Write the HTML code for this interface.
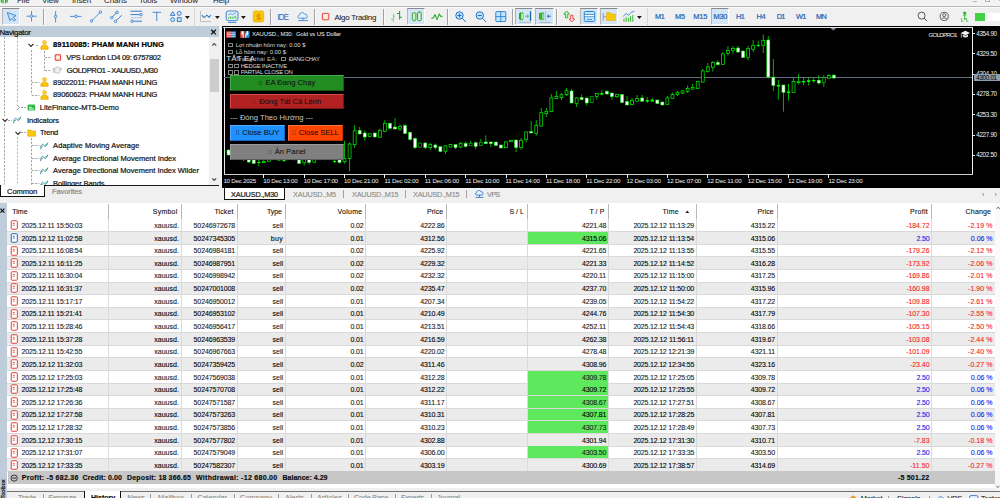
<!DOCTYPE html>
<html><head><meta charset="utf-8"><title>MT5</title>
<style>
html,body{margin:0;padding:0;}
body{width:1000px;height:498px;overflow:hidden;background:#f0f0f0;position:relative;font-family:"Liberation Sans",sans-serif;}
div{position:absolute;box-sizing:border-box;}
svg{position:absolute;overflow:visible;}
.t{font-size:7px;line-height:9px;color:#1c1c1c;white-space:nowrap;letter-spacing:-0.18px;-webkit-text-stroke:0.22px;}
.n{font-size:7px;line-height:9px;color:#111;white-space:nowrap;letter-spacing:-0.1px;-webkit-text-stroke:0.1px;}
.c{font-size:6.4px;line-height:8px;color:#fff;white-space:nowrap;letter-spacing:-0.15px;}
.m{font-size:8px;line-height:9px;color:#222;white-space:nowrap;letter-spacing:-0.1px;}
.tf{font-size:7.4px;line-height:9px;color:#2467b4;white-space:nowrap;letter-spacing:-0.1px;-webkit-text-stroke:0.22px;}
.btn{font-size:7.6px;line-height:10px;color:#0a0a0a;white-space:nowrap;text-align:center;}
.red{color:#f5222a;}
.blu{color:#1418f0;}
.g{color:#8a8a8a;}
</style></head><body>

<div style="left:0px;top:0px;width:1000px;height:6px;background:#f3f3f3;"></div>
<div class="m" style="left:17px;top:-4.2px;">File</div>
<div class="m" style="left:42px;top:-4.2px;">View</div>
<div class="m" style="left:72px;top:-4.2px;">Insert</div>
<div class="m" style="left:104px;top:-4.2px;">Charts</div>
<div class="m" style="left:139px;top:-4.2px;">Tools</div>
<div class="m" style="left:170px;top:-4.2px;">Window</div>
<div class="m" style="left:213px;top:-4.2px;">Help</div>
<svg style="left:0px;top:-3px" width="9" height="8"><path d="M1.4 0 V5.6 M3 0 V6.6 M5.6 0 V6.6 M7.2 0 V5.6" stroke="#2fb52f" stroke-width="1.3"/></svg>
<div style="left:973px;top:1.0px;width:4.4px;height:0.8px;background:#b4b4b4;"></div>
<div style="left:985.4px;top:-2px;width:4.6px;height:4px;border:0.7px solid #b4b4b4;"></div>
<svg style="left:996px;top:-2px" width="5" height="5"><path d="M1 0 L4.6 3.6" stroke="#b4b4b4" stroke-width="0.8"/></svg>
<div style="left:0px;top:5.6px;width:1000px;height:21px;background:#f0f0f0;"></div>
<div style="left:0px;top:6.1px;width:1000px;height:0.8px;background:#b8b8b8;"></div>
<div style="left:0px;top:6.9px;width:1000px;height:0.8px;background:#fcfcfc;"></div>
<div style="left:2.2px;top:8px;width:17.6px;height:17px;background:#d3e5f6;border-top:0.7px solid #8a8a8a;border-left:0.6px solid #b4b4b4;border-right:0.7px solid #fdfdfd;border-bottom:0.6px solid #fdfdfd;"></div>
<svg style="left:5px;top:9px" width="14" height="14" viewBox="0 0 14 14" ><path d="M2.3 3.5 L11 6.6 L8.3 8.3 L10.6 11 L9.2 12 L6.7 9.5 L5 11.7 Z" fill="#c4e2f8" stroke="#3a80c8" stroke-width="0.9" stroke-linejoin="round"/></svg>
<svg style="left:25px;top:9px" width="14" height="14" viewBox="0 0 14 14" ><path d="M1.5 7.2 H11.5 M6.5 2 V12.5" stroke="#2a78c8" stroke-width="0.8" fill="none"/><circle cx="6.5" cy="7.2" r="1.3" fill="#cfe6f8" stroke="#2a78c8" stroke-width="0.7"/></svg>
<div style="left:43.0px;top:9px;width:0.8px;height:15.6px;background:#a2a2a2;"></div>
<div style="left:43.8px;top:9px;width:0.7px;height:15.6px;background:#fafafa;"></div>
<svg style="left:50px;top:9px" width="12" height="15" viewBox="0 0 12 15" ><path d="M5.6 2 V13.5" stroke="#2a78c8" stroke-width="0.8"/><circle cx="5.6" cy="7.5" r="1.35" fill="#cfe6f8" stroke="#2a78c8" stroke-width="0.7"/></svg>
<svg style="left:69px;top:9px" width="14" height="14" viewBox="0 0 14 14" ><path d="M1 7.4 H12.5" stroke="#2a78c8" stroke-width="0.8"/><circle cx="7" cy="7.4" r="1.35" fill="#cfe6f8" stroke="#2a78c8" stroke-width="0.7"/></svg>
<svg style="left:89px;top:9px" width="14" height="14" viewBox="0 0 14 14" ><path d="M2.5 12 L11.5 3" stroke="#2a78c8" stroke-width="0.8"/><circle cx="2.6" cy="12" r="1.3" fill="#cfe6f8" stroke="#2a78c8" stroke-width="0.7"/><circle cx="11.4" cy="3.1" r="1.3" fill="#cfe6f8" stroke="#2a78c8" stroke-width="0.7"/></svg>
<svg style="left:109px;top:9px" width="14" height="14" viewBox="0 0 14 14" ><path d="M2.7 8.6 L8 3.3 M6.5 12.3 L12.8 6.2" stroke="#2a78c8" stroke-width="0.9"/><circle cx="8" cy="3.3" r="1.3" fill="#cfe6f8" stroke="#2a78c8" stroke-width="0.75"/><circle cx="2.7" cy="8.6" r="1.3" fill="#cfe6f8" stroke="#2a78c8" stroke-width="0.75"/><circle cx="6.5" cy="12.3" r="1.3" fill="#cfe6f8" stroke="#2a78c8" stroke-width="0.75"/></svg>
<svg style="left:129px;top:9px" width="14" height="14" viewBox="0 0 14 14" ><path d="M1.5 2.2 H13 M1.5 5.6 H11.5 M4.4 12.2 H13" stroke="#2a78c8" stroke-width="0.95"/><path d="M2 8.8 H13" stroke="#9cc6ea" stroke-width="0.9"/><circle cx="12" cy="5.6" r="1.3" fill="#cfe6f8" stroke="#2a78c8" stroke-width="0.75"/><circle cx="3.1" cy="12.2" r="1.3" fill="#cfe6f8" stroke="#2a78c8" stroke-width="0.75"/></svg>
<svg style="left:151px;top:10px" width="12" height="12" viewBox="0 0 12 12" ><path d="M1.5 2.3 H10 M5.75 2.3 V11" stroke="#2a78c8" stroke-width="0.85" fill="none"/></svg>
<svg style="left:169px;top:9px" width="14" height="14" viewBox="0 0 14 14" ><path d="M3.7 2.6 L6 6.4 H1.4 Z" fill="#cfe6f8" stroke="#2a78c8" stroke-width="0.9" stroke-linejoin="round"/><circle cx="10.2" cy="4.4" r="2" fill="#cfe6f8" stroke="#2a78c8" stroke-width="0.9"/><circle cx="3.7" cy="10.6" r="2" fill="#cfe6f8" stroke="#2a78c8" stroke-width="0.9"/><rect x="8.3" y="8.7" width="3.8" height="3.8" fill="#cfe6f8" stroke="#2a78c8" stroke-width="0.9"/></svg>
<svg style="left:184.9px;top:15.7px" width="5" height="4"><path d="M0 0 L4.8 0 L2.4 3 Z" fill="#1a1a1a"/></svg>
<svg style="left:194.0px;top:8.5px" width="1" height="16"><line x1="0.5" y1="0" x2="0.5" y2="16" stroke="#b2b2b2" stroke-width="0.9" stroke-dasharray="0.9,1"/></svg>
<svg style="left:199px;top:9px" width="14" height="14" viewBox="0 0 14 14" ><path d="M1.5 2 V12.5 H12" stroke="#a9a9a9" stroke-width="0.7" fill="none"/><path d="M2.8 6.2 L5 8.6 L8 6.2 L10 8.3 L12 6" stroke="#2a78c8" stroke-width="1.05" fill="none"/></svg>
<svg style="left:214.79999999999998px;top:15.7px" width="5" height="4"><path d="M0 0 L4.8 0 L2.4 3 Z" fill="#1a1a1a"/></svg>
<svg style="left:225px;top:9px" width="15" height="15" viewBox="0 0 15 15" ><rect x="1.2" y="2" width="11.8" height="9.6" rx="2" fill="#e6f1fb" stroke="#2a78c8" stroke-width="0.9"/><path d="M3 6 L5.5 4.6 L7.5 5.6 L11 3.6" stroke="#2a78c8" stroke-width="0.7" fill="none"/><path d="M3.6 9.8 V8 M5.4 9.8 V7.4 M7.2 9.8 V7.8 M9 9.8 V7 M10.8 9.8 V6.6" stroke="#2db52d" stroke-width="0.8"/><path d="M3 13.4 H11.4" stroke="#2a78c8" stroke-width="0.9"/></svg>
<svg style="left:240.79999999999998px;top:15.7px" width="5" height="4"><path d="M0 0 L4.8 0 L2.4 3 Z" fill="#1a1a1a"/></svg>
<svg style="left:252px;top:10px" width="13" height="13" viewBox="0 0 13 13" ><rect x="1.3" y="1" width="10.4" height="11" rx="1.6" fill="#f7c80a" stroke="#e9a90c" stroke-width="0.7"/><text x="6.5" y="9.6" font-family='"Liberation Sans",sans-serif' font-size="8.4" font-weight="bold" text-anchor="middle" fill="#e08a00">$</text></svg>
<div style="left:270.1px;top:9px;width:0.8px;height:15.6px;background:#a2a2a2;"></div>
<div style="left:270.9px;top:9px;width:0.7px;height:15.6px;background:#fafafa;"></div>
<div class="t" style="left:277.2px;top:13.0px;font-size:8.2px;letter-spacing:-0.923px;color:#2a6fc0;-webkit-text-stroke:0;">IDE</div>
<svg style="left:296px;top:10px" width="14" height="13" viewBox="0 0 14 13" ><path d="M3.6 8.2 C1.4 8.2 1.2 5.4 3.4 5.1 C3.6 2.4 7.6 1.6 8.6 4.2 C11.6 3.6 12.4 8.2 9.8 8.2 Z" fill="#e6f1fb" stroke="#2a78c8" stroke-width="0.8"/><path d="M2 10.6 H12 M7 8.4 V10.6" stroke="#2a78c8" stroke-width="0.8"/></svg>
<div style="left:314.0px;top:9px;width:0.8px;height:15.6px;background:#a2a2a2;"></div>
<div style="left:314.79999999999995px;top:9px;width:0.7px;height:15.6px;background:#fafafa;"></div>
<svg style="left:321px;top:12px" width="9" height="9" viewBox="0 0 9 9" ><rect x="1.4" y="1.4" width="6.4" height="6.4" rx="0.5" fill="#fdeadb" stroke="#dc3232" stroke-width="0.9"/></svg>
<div class="t" style="left:334.5px;top:12.7px;font-size:7.9px;letter-spacing:-0.222px;color:#1e1e1e;line-height:10px;-webkit-text-stroke:0.08px;">Algo Trading</div>
<div style="left:382.90000000000003px;top:9px;width:0.8px;height:15.6px;background:#a2a2a2;"></div>
<div style="left:383.7px;top:9px;width:0.7px;height:15.6px;background:#fafafa;"></div>
<svg style="left:390px;top:9px" width="14" height="14" viewBox="0 0 14 14" ><path d="M3.4 5 V13.1 M1 10.3 H3.4 M3.4 7.2 H5" stroke="#5fcf5f" stroke-width="0.8" fill="none"/><path d="M9.6 1.9 V10.6 M7 4.4 H9.6 M9.6 8.25 H12" stroke="#22a822" stroke-width="1.05" fill="none"/></svg>
<div style="left:406.8px;top:8px;width:18.3px;height:17px;background:#d3e5f6;border-top:0.7px solid #8a8a8a;border-left:0.6px solid #b4b4b4;border-right:0.7px solid #fdfdfd;border-bottom:0.6px solid #fdfdfd;"></div>
<svg style="left:410px;top:9px" width="13" height="14" viewBox="0 0 13 14" ><rect x="2.3" y="3.9" width="3.6" height="7.4" rx="0.9" fill="#dcebdc" stroke="#22a822" stroke-width="0.95"/><rect x="7.6" y="3.2" width="3.6" height="8.4" rx="0.9" fill="#dcebdc" stroke="#22a822" stroke-width="0.95"/><path d="M4.1 11.3 V12.6 M9.4 2 V3.2" stroke="#22a822" stroke-width="0.7"/></svg>
<svg style="left:430px;top:10px" width="14" height="13" viewBox="0 0 14 13" ><path d="M1.4 8.6 L3.5 7.7 L5 4.6 L7 9.6 L9.3 3.9 L10.8 6.5 L12.6 6.3" stroke="#22a822" stroke-width="1.05" fill="none" stroke-linejoin="round"/></svg>
<div style="left:447.40000000000003px;top:9px;width:0.8px;height:15.6px;background:#a2a2a2;"></div>
<div style="left:448.2px;top:9px;width:0.7px;height:15.6px;background:#fafafa;"></div>
<svg style="left:454px;top:10px" width="14" height="14" viewBox="0 0 14 14" ><circle cx="5.5" cy="5.5" r="3.7" fill="#c6e6fb" stroke="#1f72c4" stroke-width="1"/><path d="M8.3 8.3 L11.8 12" stroke="#1f72c4" stroke-width="1"/><path d="M3.4 5.5 H7.6 M5.5 3.4 V7.6" stroke="#1f72c4" stroke-width="1.1"/></svg>
<svg style="left:474px;top:10px" width="14" height="14" viewBox="0 0 14 14" ><circle cx="5.8" cy="5.5" r="3.7" fill="#c6e6fb" stroke="#1f72c4" stroke-width="1"/><path d="M8.6 8.3 L12.1 12" stroke="#1f72c4" stroke-width="1"/><path d="M3.7 5.5 H7.9" stroke="#1f72c4" stroke-width="1.1"/></svg>
<svg style="left:494px;top:10px" width="13" height="13" viewBox="0 0 13 13" ><rect x="1.8" y="1.6" width="10" height="10" rx="0.8" fill="#c2e5fb" stroke="#2a7fd0" stroke-width="0.95"/><path d="M6.8 1.6 V11.6 M1.8 6.6 H11.8" stroke="#2a7fd0" stroke-width="0.9"/></svg>
<div style="left:512.1px;top:9px;width:0.8px;height:15.6px;background:#a2a2a2;"></div>
<div style="left:512.9px;top:9px;width:0.7px;height:15.6px;background:#fafafa;"></div>
<div style="left:515.3px;top:8px;width:18px;height:17px;background:#d3e5f6;border-top:0.7px solid #8a8a8a;border-left:0.6px solid #b4b4b4;border-right:0.7px solid #fdfdfd;border-bottom:0.6px solid #fdfdfd;"></div>
<svg style="left:517px;top:9px" width="16" height="15" viewBox="0 0 16 15" ><path d="M2 4.4 L4 3 V11.4 L2 10 Z" fill="#22a822"/><rect x="4" y="4.4" width="2.2" height="5.6" fill="#c4f0c4" stroke="#3cc03c" stroke-width="0.5"/><path d="M5.1 3 V4.4 M5.1 10 V11.4" stroke="#22a822" stroke-width="1"/><path d="M8 7.2 H11.4 M10 5.6 L11.7 7.2 L10 8.8" stroke="#3cc03c" stroke-width="0.9" fill="none"/><path d="M13.5 2.2 V11.9" stroke="#1464b4" stroke-width="1.2"/><path d="M2 13.4 H14" stroke="#a0a0a0" stroke-width="0.7"/></svg>
<div style="left:535.3px;top:8px;width:18.4px;height:17px;background:#d3e5f6;border-top:0.7px solid #8a8a8a;border-left:0.6px solid #b4b4b4;border-right:0.7px solid #fdfdfd;border-bottom:0.6px solid #fdfdfd;"></div>
<svg style="left:537px;top:9px" width="16" height="15" viewBox="0 0 16 15" ><path d="M2 4.4 L3.6 3.2 V11.2 L2 10 Z" fill="#22a822"/><rect x="3.6" y="3.8" width="1.6" height="6.8" fill="#22a822"/><rect x="5" y="4.4" width="1.9" height="5.6" fill="#a8e8a8" stroke="#3cc03c" stroke-width="0.5"/><path d="M5.9 3 V4.4 M5.9 10 V11.4" stroke="#22a822" stroke-width="0.9"/><path d="M8.6 2.2 V11.9" stroke="#8ab4de" stroke-width="0.7"/><path d="M10.4 7.2 H14 M12 5.7 L10.3 7.2 L12 8.7" stroke="#1464b4" stroke-width="0.9" fill="none"/><path d="M2 13.4 H14" stroke="#a0a0a0" stroke-width="0.7"/></svg>
<div style="left:556.1px;top:9px;width:0.8px;height:15.6px;background:#a2a2a2;"></div>
<div style="left:556.9px;top:9px;width:0.7px;height:15.6px;background:#fafafa;"></div>
<svg style="left:562px;top:9px" width="14" height="14" viewBox="0 0 14 14" ><path d="M4.6 2 L7.4 5 H5.8 V8.8 H3.4 V5 H1.8 Z" fill="#d4f6d4" stroke="#22aa22" stroke-width="0.9" stroke-linejoin="round"/><path d="M9.8 13 L7 10 H8.6 V6.2 H11 V10 H12.6 Z" fill="#fbdcdc" stroke="#e04444" stroke-width="0.9" stroke-linejoin="round"/></svg>
<div style="left:579.5px;top:8px;width:18px;height:17px;background:#d3e5f6;border-top:0.7px solid #8a8a8a;border-left:0.6px solid #b4b4b4;border-right:0.7px solid #fdfdfd;border-bottom:0.6px solid #fdfdfd;"></div>
<svg style="left:583px;top:10px" width="13" height="13" viewBox="0 0 13 13" ><rect x="1.3" y="1.5" width="10.4" height="10" rx="1" fill="#c2e5fb" stroke="#2a7fd0" stroke-width="0.95"/><path d="M1.3 4.6 H11.7 M1.3 6.6 H11.7" stroke="#2a7fd0" stroke-width="0.8"/><rect x="1.8" y="5" width="9.4" height="1.2" fill="#fff"/><path d="M4 9.4 H9" stroke="#2a7fd0" stroke-width="0.8"/></svg>
<div style="left:599.7px;top:8px;width:18.2px;height:17px;background:#d3e5f6;border-top:0.7px solid #8a8a8a;border-left:0.6px solid #b4b4b4;border-right:0.7px solid #fdfdfd;border-bottom:0.6px solid #fdfdfd;"></div>
<svg style="left:602px;top:10px" width="16" height="13" viewBox="0 0 16 13" ><path d="M1.2 3 V10.6 M1.2 6.8 H4.6" stroke="#8a8a8a" stroke-width="0.8" fill="none"/><path d="M4.6 2.6 H8.4 L9.2 4 H13.6 V10.4 H4.6 Z" fill="#f7c80a" stroke="#e9a90c" stroke-width="0.6"/></svg>
<svg style="left:621.5px;top:10px" width="14" height="13" viewBox="0 0 14 13" ><path d="M1.2 6.6 L4 3.4 L6.6 5.2 L9.4 2.2 L12.4 1.4" stroke="#2a78c8" stroke-width="0.8" fill="none"/><path d="M2 11.8 V8.6 M4.2 11.8 V6.8 M6.4 11.8 V8 M8.6 11.8 V6.2 M10.8 11.8 V5" stroke="#2db52d" stroke-width="0.95"/></svg>
<svg style="left:637.2px;top:16.2px" width="5" height="4"><path d="M0 0 L4.8 0 L2.4 3 Z" fill="#1a1a1a"/></svg>
<svg style="left:646.5px;top:8.5px" width="1" height="16"><line x1="0.5" y1="0" x2="0.5" y2="16" stroke="#b2b2b2" stroke-width="0.9" stroke-dasharray="0.9,1"/></svg>
<div style="left:710.6px;top:8px;width:18.4px;height:17px;background:#d3e5f6;border-top:0.7px solid #8a8a8a;border-left:0.6px solid #b4b4b4;border-right:0.7px solid #fdfdfd;border-bottom:0.6px solid #fdfdfd;"></div>
<div class="tf" style="left:655px;top:12.1px;font-size:7.4px;letter-spacing:-0.340px;">M1</div>
<div class="tf" style="left:675px;top:12.1px;font-size:7.4px;letter-spacing:-0.140px;">M5</div>
<div class="tf" style="left:693.3px;top:12.1px;font-size:7.4px;letter-spacing:-0.199px;">M15</div>
<div class="tf" style="left:713.6px;top:12.1px;font-size:7.4px;letter-spacing:-0.265px;">M30</div>
<div class="tf" style="left:736px;top:12.1px;font-size:7.4px;letter-spacing:-0.630px;">H1</div>
<div class="tf" style="left:756.5px;top:12.1px;font-size:7.4px;letter-spacing:-0.330px;">H4</div>
<div class="tf" style="left:776.8px;top:12.1px;font-size:7.4px;letter-spacing:-0.830px;">D1</div>
<div class="tf" style="left:796px;top:12.1px;font-size:7.4px;letter-spacing:-0.750px;">W1</div>
<div class="tf" style="left:816px;top:12.1px;font-size:7.4px;letter-spacing:-0.654px;">MN</div>
<svg style="left:916px;top:10px" width="13" height="13" viewBox="0 0 13 13" ><circle cx="5.6" cy="5.6" r="3.5" fill="none" stroke="#3a3a3a" stroke-width="0.85"/><path d="M8.2 8.2 L11 11.2" stroke="#3a3a3a" stroke-width="0.9"/></svg>
<svg style="left:938px;top:10px" width="13" height="13" viewBox="0 0 13 13" ><circle cx="6.2" cy="6.4" r="4.1" fill="none" stroke="#3a3a3a" stroke-width="0.8"/><circle cx="6.2" cy="5.2" r="1.5" fill="none" stroke="#3a3a3a" stroke-width="0.75"/><path d="M3.4 9.2 C4.2 7.4 8.2 7.4 9 9.2" fill="none" stroke="#3a3a3a" stroke-width="0.75"/></svg>
<svg style="left:959px;top:10px" width="12" height="13" viewBox="0 0 12 13" ><circle cx="5.7" cy="3" r="1.6" fill="#2db52d"/><path d="M5.7 3 V8.2 M4 5.6 L5.7 4.2 L7.4 5.6" stroke="#2db52d" stroke-width="0.9" fill="none"/><path d="M2.6 8 V11.4 H4.4 M5.8 8.4 V10 M5 8 L5.8 9.6 L6.6 8 M7.6 8 V11.4 H9.2" stroke="#2db52d" stroke-width="0.7" fill="none"/></svg>
<div style="left:975px;top:12.6px;width:25px;height:8.4px;background:#fff;"></div>
<div style="left:975px;top:12.6px;width:9.7px;height:8.4px;background:#44d044;"></div>
<div style="left:0px;top:26.4px;width:219px;height:10.8px;background:#bfcddb;"></div>
<div class="t" style="left:-0.6px;top:27.6px;font-size:7.9px;letter-spacing:-0.290px;color:#111;">Navigator</div>
<svg style="left:210px;top:29px" width="8" height="8" viewBox="0 0 8 8" ><path d="M1.2 0.8 L5.8 5.4 M5.8 0.8 L1.2 5.4" stroke="#0a0a0a" stroke-width="1.25"/></svg>
<div style="left:0px;top:37.2px;width:209.4px;height:148px;background:#fff;"></div>
<div style="left:209.4px;top:37.2px;width:9.6px;height:148px;background:#f0f0f0;"></div>
<div style="left:210px;top:59px;width:9px;height:32.6px;background:#cdcdcd;"></div>
<svg style="left:211px;top:41.6px" width="7" height="5" viewBox="0 0 7 5" ><path d="M1.2 3.6 L3.2 1.5 L5.2 3.6" stroke="#4a4a4a" stroke-width="1.1" fill="none"/></svg>
<svg style="left:211px;top:177px" width="7" height="5" viewBox="0 0 7 5" ><path d="M1.2 1.4 L3.2 3.5 L5.2 1.4" stroke="#4a4a4a" stroke-width="1.1" fill="none"/></svg>
<svg style="left:4.1px;top:37.2px" width="1" height="79.14"><line x1="0.5" y1="0" x2="0.5" y2="79.14" stroke="#707070" stroke-width="0.65" stroke-dasharray="2.2,1.5"/></svg>
<svg style="left:4.1px;top:124.34px" width="1" height="60.66"><line x1="0.5" y1="0" x2="0.5" y2="60.66" stroke="#707070" stroke-width="0.65" stroke-dasharray="2.2,1.5"/></svg>
<svg style="left:17.3px;top:37.2px" width="1" height="65.5"><line x1="0.5" y1="0" x2="0.5" y2="65.5" stroke="#b0b0b0" stroke-width="0.9" stroke-dasharray="2.2,1.5"/></svg>
<svg style="left:17.3px;top:136.98000000000002px" width="1" height="48.01999999999998"><line x1="0.5" y1="0" x2="0.5" y2="48.01999999999998" stroke="#b0b0b0" stroke-width="0.9" stroke-dasharray="2.2,1.5"/></svg>
<svg style="left:31.0px;top:50.0px" width="1" height="45.06"><line x1="0.5" y1="0" x2="0.5" y2="45.06" stroke="#707070" stroke-width="0.65" stroke-dasharray="2.2,1.5"/></svg>
<svg style="left:43.9px;top:50.8px" width="1" height="19.58"><line x1="0.5" y1="0" x2="0.5" y2="19.58" stroke="#707070" stroke-width="0.65" stroke-dasharray="2.2,1.5"/></svg>
<svg style="left:31.0px;top:137.98000000000002px" width="1" height="47.01999999999998"><line x1="0.5" y1="0" x2="0.5" y2="47.01999999999998" stroke="#707070" stroke-width="0.65" stroke-dasharray="2.2,1.5"/></svg>
<div class="t" style="left:53.1px;top:39.8px;font-size:7.5px;letter-spacing:0.105px;font-weight:bold;line-height:9px;color:#161616;color:#000;">89110085: PHAM MANH HUNG</div>
<div class="t" style="left:66.2px;top:52.94px;font-size:7.5px;letter-spacing:-0.283px;line-height:9px;color:#161616;">VPS London LD4 09: 6757802</div>
<div class="t" style="left:66.8px;top:65.58px;font-size:7.5px;letter-spacing:-0.348px;line-height:9px;color:#161616;">GOLDPRO1 - XAUUSD.,M30</div>
<div class="t" style="left:53.1px;top:77.72px;font-size:7.5px;letter-spacing:-0.120px;line-height:9px;color:#161616;">89022011: PHAM MANH HUNG</div>
<div class="t" style="left:53.1px;top:90.36px;font-size:7.5px;letter-spacing:-0.143px;line-height:9px;color:#161616;">89060623: PHAM MANH HUNG</div>
<div class="t" style="left:39.8px;top:103.0px;font-size:7.5px;letter-spacing:0.021px;line-height:9px;color:#161616;">LiteFinance-MT5-Demo</div>
<div class="t" style="left:27px;top:116.14px;font-size:7.5px;letter-spacing:-0.052px;line-height:9px;color:#161616;">Indicators</div>
<div class="t" style="left:40px;top:128.28000000000003px;font-size:7.5px;letter-spacing:-0.263px;line-height:9px;color:#161616;">Trend</div>
<div class="t" style="left:53.1px;top:140.92000000000002px;font-size:7.5px;letter-spacing:0.064px;line-height:9px;color:#161616;">Adaptive Moving Average</div>
<div class="t" style="left:53.1px;top:153.56px;font-size:7.5px;letter-spacing:0.002px;line-height:9px;color:#161616;">Average Directional Movement Index</div>
<div class="t" style="left:53.1px;top:166.20000000000002px;font-size:7.5px;letter-spacing:-0.007px;line-height:9px;color:#161616;">Average Directional Movement Index Wilder</div>
<div class="t" style="left:53.1px;top:178.84000000000003px;font-size:7.5px;letter-spacing:-0.076px;line-height:9px;color:#161616;">Bollinger Bands</div>
<svg style="left:27.6px;top:42.5px" width="6" height="5" viewBox="0 0 6 5" ><path d="M0.5 0.9 L3 3.4 L5.5 0.9" stroke="#222" stroke-width="1.1" fill="none"/></svg>
<div style="left:36.4px;top:45.3px;width:1.2px;height:0.6px;background:#b0b0b0;"></div>
<svg style="left:40.0px;top:39.5px" width="9" height="10" viewBox="0 0 9 10" ><circle cx="4.5" cy="2.5" r="1.9" fill="#fdd24a" stroke="#f0a800" stroke-width="0.7"/><path d="M0.9 9.3 V7.2 C0.9 4.6 8.1 4.6 8.1 7.2 V9.3 Z" fill="#fcc400" stroke="#eaa200" stroke-width="0.7"/></svg>
<svg style="left:44.5px;top:57.14px" width="6.5" height="1"><line x1="0" y1="0.5" x2="6.5" y2="0.5" stroke="#707070" stroke-width="0.65" stroke-dasharray="2,1.3"/></svg>
<svg style="left:54px;top:53.94px" width="8" height="8" viewBox="0 0 8 8" ><rect x="1.2" y="0.8" width="5.4" height="5.4" rx="0.2" fill="#fde6d2" stroke="#e03434" stroke-width="1"/></svg>
<svg style="left:44.5px;top:70.08px" width="6.5" height="1"><line x1="0" y1="0.5" x2="6.5" y2="0.5" stroke="#707070" stroke-width="0.65" stroke-dasharray="2,1.3"/></svg>
<svg style="left:52.4px;top:66.38px" width="11" height="8" viewBox="0 0 11 8" ><path d="M0.8 3 L5.4 0.8 L10 3 L5.4 5.2 Z" fill="#eeeeee" stroke="#a0a0a0" stroke-width="0.6"/><path d="M2.8 4.2 V6.4 C4 7.4 6.8 7.4 8 6.4 V4.2" fill="#f4f4f4" stroke="#a0a0a0" stroke-width="0.6"/><path d="M1.4 3.4 V7" stroke="#a0a0a0" stroke-width="0.6"/></svg>
<svg style="left:31.5px;top:81.92px" width="7.5" height="1"><line x1="0" y1="0.5" x2="7.5" y2="0.5" stroke="#707070" stroke-width="0.65" stroke-dasharray="2,1.3"/></svg>
<svg style="left:39.7px;top:77.32000000000001px" width="9" height="10" viewBox="0 0 9 10" ><circle cx="4.5" cy="2.5" r="1.9" fill="#fdd24a" stroke="#f0a800" stroke-width="0.7"/><path d="M0.9 9.3 V7.2 C0.9 4.6 8.1 4.6 8.1 7.2 V9.3 Z" fill="#fcc400" stroke="#eaa200" stroke-width="0.7"/></svg>
<svg style="left:31.5px;top:94.56px" width="7.5" height="1"><line x1="0" y1="0.5" x2="7.5" y2="0.5" stroke="#707070" stroke-width="0.65" stroke-dasharray="2,1.3"/></svg>
<svg style="left:39.7px;top:89.96000000000001px" width="9" height="10" viewBox="0 0 9 10" ><circle cx="4.5" cy="2.5" r="1.9" fill="#fdd24a" stroke="#f0a800" stroke-width="0.7"/><path d="M0.9 9.3 V7.2 C0.9 4.6 8.1 4.6 8.1 7.2 V9.3 Z" fill="#fcc400" stroke="#eaa200" stroke-width="0.7"/></svg>
<svg style="left:15.600000000000001px;top:104.3px" width="5" height="7" viewBox="0 0 5 7" ><path d="M0.8 0.6 L3.5 3.4 L0.8 6.2" stroke="#8c8c8c" stroke-width="1" fill="none"/></svg>
<svg style="left:21px;top:107.2px" width="5" height="1"><line x1="0" y1="0.5" x2="5" y2="0.5" stroke="#707070" stroke-width="0.65" stroke-dasharray="2,1.3"/></svg>
<svg style="left:26.5px;top:104.10000000000001px" width="9" height="8" viewBox="0 0 9 8" ><rect x="0.6" y="0.6" width="7.6" height="6" rx="1.2" fill="#30b94a"/><path d="M2 5 H7 M2.2 3.4 H4.6" stroke="#fff" stroke-width="0.9"/></svg>
<svg style="left:1.5999999999999996px;top:118.14px" width="6" height="5" viewBox="0 0 6 5" ><path d="M0.5 0.9 L3 3.4 L5.5 0.9" stroke="#222" stroke-width="1.1" fill="none"/></svg>
<svg style="left:8px;top:119.84px" width="4" height="1"><line x1="0" y1="0.5" x2="4" y2="0.5" stroke="#707070" stroke-width="0.65" stroke-dasharray="2,1.3"/></svg>
<svg style="left:13.200000000000001px;top:116.34px" width="9" height="8" viewBox="0 0 9 8" ><path d="M0.7 7.2 C0.9 2.4 2.6 1.2 3.8 3.2 C5 5.4 6.6 4.8 7.8 0.6" stroke="#3a80d0" stroke-width="0.9" fill="none"/><path d="M0.6 5 L2.8 4.2 M4.8 3.4 L7.4 1.8" stroke="#34b034" stroke-width="0.95" fill="none"/></svg>
<svg style="left:14.600000000000001px;top:130.78000000000003px" width="6" height="5" viewBox="0 0 6 5" ><path d="M0.5 0.9 L3 3.4 L5.5 0.9" stroke="#222" stroke-width="1.1" fill="none"/></svg>
<svg style="left:21px;top:132.48000000000002px" width="5" height="1"><line x1="0" y1="0.5" x2="5" y2="0.5" stroke="#707070" stroke-width="0.65" stroke-dasharray="2,1.3"/></svg>
<svg style="left:26.5px;top:128.98000000000002px" width="10" height="8" viewBox="0 0 10 8" ><path d="M0.7 1 H3.8 L4.6 2 H8.6 V7.2 H0.7 Z" fill="#f9c614" stroke="#e3a50e" stroke-width="0.6"/></svg>
<svg style="left:31.5px;top:145.12px" width="7.5" height="1"><line x1="0" y1="0.5" x2="7.5" y2="0.5" stroke="#707070" stroke-width="0.65" stroke-dasharray="2,1.3"/></svg>
<svg style="left:39.800000000000004px;top:141.62px" width="9" height="8" viewBox="0 0 9 8" ><path d="M0.7 7.2 C0.9 2.4 2.6 1.2 3.8 3.2 C5 5.4 6.6 4.8 7.8 0.6" stroke="#3a80d0" stroke-width="0.9" fill="none"/><path d="M0.6 5 L2.8 4.2 M4.8 3.4 L7.4 1.8" stroke="#34b034" stroke-width="0.95" fill="none"/></svg>
<svg style="left:31.5px;top:157.76px" width="7.5" height="1"><line x1="0" y1="0.5" x2="7.5" y2="0.5" stroke="#707070" stroke-width="0.65" stroke-dasharray="2,1.3"/></svg>
<svg style="left:39.800000000000004px;top:154.26px" width="9" height="8" viewBox="0 0 9 8" ><path d="M0.7 7.2 C0.9 2.4 2.6 1.2 3.8 3.2 C5 5.4 6.6 4.8 7.8 0.6" stroke="#3a80d0" stroke-width="0.9" fill="none"/><path d="M0.6 5 L2.8 4.2 M4.8 3.4 L7.4 1.8" stroke="#34b034" stroke-width="0.95" fill="none"/></svg>
<svg style="left:31.5px;top:170.4px" width="7.5" height="1"><line x1="0" y1="0.5" x2="7.5" y2="0.5" stroke="#707070" stroke-width="0.65" stroke-dasharray="2,1.3"/></svg>
<svg style="left:39.800000000000004px;top:166.9px" width="9" height="8" viewBox="0 0 9 8" ><path d="M0.7 7.2 C0.9 2.4 2.6 1.2 3.8 3.2 C5 5.4 6.6 4.8 7.8 0.6" stroke="#3a80d0" stroke-width="0.9" fill="none"/><path d="M0.6 5 L2.8 4.2 M4.8 3.4 L7.4 1.8" stroke="#34b034" stroke-width="0.95" fill="none"/></svg>
<svg style="left:31.5px;top:183.04000000000002px" width="7.5" height="1"><line x1="0" y1="0.5" x2="7.5" y2="0.5" stroke="#707070" stroke-width="0.65" stroke-dasharray="2,1.3"/></svg>
<svg style="left:39.800000000000004px;top:179.54000000000002px" width="9" height="8" viewBox="0 0 9 8" ><path d="M0.7 7.2 C0.9 2.4 2.6 1.2 3.8 3.2 C5 5.4 6.6 4.8 7.8 0.6" stroke="#3a80d0" stroke-width="0.9" fill="none"/><path d="M0.6 5 L2.8 4.2 M4.8 3.4 L7.4 1.8" stroke="#34b034" stroke-width="0.95" fill="none"/></svg>
<div style="left:0px;top:185px;width:222px;height:18.2px;background:#f0f0f0;"></div>
<div style="left:44px;top:185px;width:175.4px;height:0.9px;background:#1a1a1a;"></div>
<div style="left:0px;top:184.6px;width:44.6px;height:12.3px;background:#fff;border:1px solid #111;border-top:none;"></div>
<div class="t" style="left:7px;top:187px;font-size:7.6px;letter-spacing:-0.1px;color:#1a1a1a;">Common</div>
<div class="t" style="left:52px;top:187px;font-size:7.6px;letter-spacing:-0.15px;color:#8c8c8c;">Favorites</div>
<div style="left:222px;top:26px;width:778px;height:162px;background:#000;"></div>
<div style="left:223.2px;top:27.2px;width:749.6px;height:0.65px;background:#e8e8e8;"></div>
<div style="left:223.5px;top:27.2px;width:0.7px;height:147.6px;background:#e8e8e8;"></div>
<div style="left:972.2px;top:27.2px;width:0.75px;height:147.6px;background:#f0f0f0;"></div>
<div style="left:223.5px;top:174.1px;width:749.4px;height:0.75px;background:#cfcfcf;"></div>
<div style="left:224px;top:77px;width:748.4px;height:0.8px;background:#5e6e80;"></div>
<svg style="left:222px;top:26px" width="778" height="162" viewBox="0 0 778 162"><line x1="6.50" y1="123.50" x2="6.50" y2="129.00" stroke="#00ff00" stroke-width="0.7"/><rect x="5.00" y="124.00" width="3" height="5.00" fill="#fff" stroke="#00ff00" stroke-width="0.55"/><line x1="11.50" y1="126.00" x2="11.50" y2="132.00" stroke="#00ff00" stroke-width="0.7"/><rect x="10.00" y="128.00" width="3" height="3.00" fill="#fff" stroke="#00ff00" stroke-width="0.55"/><line x1="16.60" y1="129.00" x2="16.60" y2="134.00" stroke="#00ff00" stroke-width="0.7"/><rect x="15.10" y="130.00" width="3" height="3.00" fill="#fff" stroke="#00ff00" stroke-width="0.55"/><line x1="21.60" y1="130.00" x2="21.60" y2="135.00" stroke="#00ff00" stroke-width="0.7"/><rect x="20.15" y="131.30" width="2.9" height="2.40" fill="#000" stroke="#00ff00" stroke-width="0.68"/><line x1="26.70" y1="131.00" x2="26.70" y2="137.00" stroke="#00ff00" stroke-width="0.7"/><rect x="25.20" y="132.00" width="3" height="4.00" fill="#fff" stroke="#00ff00" stroke-width="0.55"/><line x1="31.70" y1="132.00" x2="31.70" y2="137.50" stroke="#00ff00" stroke-width="0.7"/><rect x="30.20" y="133.00" width="3" height="4.50" fill="#fff" stroke="#00ff00" stroke-width="0.55"/><line x1="36.80" y1="132.00" x2="36.80" y2="140.50" stroke="#00ff00" stroke-width="0.7"/><rect x="35.20" y="136.00" width="3.2" height="1.00" fill="#00ff00"/><line x1="41.80" y1="133.00" x2="41.80" y2="137.00" stroke="#00ff00" stroke-width="0.7"/><rect x="40.35" y="135.30" width="2.9" height="1.40" fill="#000" stroke="#00ff00" stroke-width="0.68"/><line x1="46.90" y1="132.00" x2="46.90" y2="135.50" stroke="#00ff00" stroke-width="0.7"/><rect x="45.45" y="133.30" width="2.9" height="1.90" fill="#000" stroke="#00ff00" stroke-width="0.68"/><line x1="51.90" y1="130.00" x2="51.90" y2="134.00" stroke="#00ff00" stroke-width="0.7"/><rect x="50.45" y="131.30" width="2.9" height="2.40" fill="#000" stroke="#00ff00" stroke-width="0.68"/><line x1="57.00" y1="130.00" x2="57.00" y2="134.50" stroke="#00ff00" stroke-width="0.7"/><rect x="55.40" y="132.00" width="3.2" height="2.50" fill="#00ff00"/><line x1="62.00" y1="131.00" x2="62.00" y2="136.00" stroke="#00ff00" stroke-width="0.7"/><rect x="60.40" y="134.00" width="3.2" height="1.00" fill="#00ff00"/><line x1="67.00" y1="129.00" x2="67.00" y2="133.00" stroke="#00ff00" stroke-width="0.7"/><rect x="65.55" y="130.30" width="2.9" height="2.40" fill="#000" stroke="#00ff00" stroke-width="0.68"/><line x1="72.10" y1="130.00" x2="72.10" y2="134.50" stroke="#00ff00" stroke-width="0.7"/><rect x="70.50" y="132.00" width="3.2" height="1.00" fill="#00ff00"/><line x1="77.10" y1="131.00" x2="77.10" y2="137.50" stroke="#00ff00" stroke-width="0.7"/><rect x="75.60" y="132.00" width="3" height="5.50" fill="#fff" stroke="#00ff00" stroke-width="0.55"/><line x1="82.20" y1="132.00" x2="82.20" y2="139.50" stroke="#00ff00" stroke-width="0.7"/><rect x="80.75" y="133.30" width="2.9" height="3.40" fill="#000" stroke="#00ff00" stroke-width="0.68"/><line x1="87.20" y1="131.00" x2="87.20" y2="138.50" stroke="#00ff00" stroke-width="0.7"/><rect x="85.70" y="132.00" width="3" height="4.50" fill="#fff" stroke="#00ff00" stroke-width="0.55"/><line x1="92.30" y1="131.00" x2="92.30" y2="136.50" stroke="#00ff00" stroke-width="0.7"/><rect x="90.85" y="133.30" width="2.9" height="2.90" fill="#000" stroke="#00ff00" stroke-width="0.68"/><line x1="97.30" y1="129.00" x2="97.30" y2="133.00" stroke="#00ff00" stroke-width="0.7"/><rect x="95.85" y="130.30" width="2.9" height="2.40" fill="#000" stroke="#00ff00" stroke-width="0.68"/><line x1="102.40" y1="128.00" x2="102.40" y2="132.50" stroke="#00ff00" stroke-width="0.7"/><rect x="100.90" y="129.00" width="3" height="3.50" fill="#fff" stroke="#00ff00" stroke-width="0.55"/><line x1="107.40" y1="129.00" x2="107.40" y2="133.00" stroke="#00ff00" stroke-width="0.7"/><rect x="105.95" y="130.30" width="2.9" height="2.40" fill="#000" stroke="#00ff00" stroke-width="0.68"/><line x1="112.50" y1="131.00" x2="112.50" y2="137.00" stroke="#00ff00" stroke-width="0.7"/><rect x="110.90" y="135.00" width="3.2" height="1.00" fill="#00ff00"/><line x1="117.50" y1="131.00" x2="117.50" y2="137.50" stroke="#00ff00" stroke-width="0.7"/><rect x="116.00" y="133.00" width="3" height="3.50" fill="#fff" stroke="#00ff00" stroke-width="0.55"/><line x1="122.53" y1="114.70" x2="122.53" y2="137.60" stroke="#00ff00" stroke-width="0.7"/><rect x="121.08" y="132.30" width="2.9" height="3.40" fill="#000" stroke="#00ff00" stroke-width="0.68"/><line x1="127.58" y1="116.30" x2="127.58" y2="145.30" stroke="#00ff00" stroke-width="0.7"/><rect x="126.13" y="118.00" width="2.9" height="14.50" fill="#000" stroke="#00ff00" stroke-width="0.68"/><line x1="132.62" y1="99.00" x2="132.62" y2="122.00" stroke="#00ff00" stroke-width="0.7"/><rect x="131.18" y="104.80" width="2.9" height="13.90" fill="#000" stroke="#00ff00" stroke-width="0.68"/><line x1="137.67" y1="101.00" x2="137.67" y2="108.00" stroke="#00ff00" stroke-width="0.7"/><rect x="136.17" y="104.50" width="3" height="3.50" fill="#fff" stroke="#00ff00" stroke-width="0.55"/><line x1="142.72" y1="104.50" x2="142.72" y2="114.70" stroke="#00ff00" stroke-width="0.7"/><rect x="141.22" y="107.00" width="3" height="4.00" fill="#fff" stroke="#00ff00" stroke-width="0.55"/><line x1="147.76" y1="107.50" x2="147.76" y2="110.70" stroke="#00ff00" stroke-width="0.7"/><rect x="146.31" y="107.80" width="2.9" height="2.60" fill="#000" stroke="#00ff00" stroke-width="0.68"/><line x1="152.81" y1="107.00" x2="152.81" y2="111.00" stroke="#00ff00" stroke-width="0.7"/><rect x="151.31" y="107.00" width="3" height="4.00" fill="#fff" stroke="#00ff00" stroke-width="0.55"/><line x1="157.85" y1="102.70" x2="157.85" y2="111.50" stroke="#00ff00" stroke-width="0.7"/><rect x="156.40" y="104.30" width="2.9" height="6.90" fill="#000" stroke="#00ff00" stroke-width="0.68"/><line x1="162.89" y1="94.00" x2="162.89" y2="105.70" stroke="#00ff00" stroke-width="0.7"/><rect x="161.44" y="97.30" width="2.9" height="8.10" fill="#000" stroke="#00ff00" stroke-width="0.68"/><line x1="167.94" y1="97.30" x2="167.94" y2="102.30" stroke="#00ff00" stroke-width="0.7"/><rect x="166.44" y="97.30" width="3" height="5.00" fill="#fff" stroke="#00ff00" stroke-width="0.55"/><line x1="172.99" y1="92.00" x2="172.99" y2="103.00" stroke="#00ff00" stroke-width="0.7"/><rect x="171.49" y="101.00" width="3" height="2.00" fill="#fff" stroke="#00ff00" stroke-width="0.55"/><line x1="178.03" y1="98.50" x2="178.03" y2="105.00" stroke="#00ff00" stroke-width="0.7"/><rect x="176.58" y="100.60" width="2.9" height="2.40" fill="#000" stroke="#00ff00" stroke-width="0.68"/><line x1="183.07" y1="97.90" x2="183.07" y2="107.50" stroke="#00ff00" stroke-width="0.7"/><rect x="181.57" y="99.70" width="3" height="7.80" fill="#fff" stroke="#00ff00" stroke-width="0.55"/><line x1="188.12" y1="106.30" x2="188.12" y2="114.50" stroke="#00ff00" stroke-width="0.7"/><rect x="186.62" y="106.30" width="3" height="7.20" fill="#fff" stroke="#00ff00" stroke-width="0.55"/><line x1="193.16" y1="111.00" x2="193.16" y2="123.00" stroke="#00ff00" stroke-width="0.7"/><rect x="191.66" y="112.70" width="3" height="8.90" fill="#fff" stroke="#00ff00" stroke-width="0.55"/><line x1="198.21" y1="116.80" x2="198.21" y2="121.60" stroke="#00ff00" stroke-width="0.7"/><rect x="196.76" y="117.10" width="2.9" height="4.20" fill="#000" stroke="#00c000" stroke-width="0.68"/><line x1="203.25" y1="116.00" x2="203.25" y2="123.00" stroke="#00ff00" stroke-width="0.7"/><rect x="201.75" y="117.00" width="3" height="4.60" fill="#fff" stroke="#00ff00" stroke-width="0.55"/><line x1="208.30" y1="117.00" x2="208.30" y2="124.00" stroke="#00ff00" stroke-width="0.7"/><rect x="206.85" y="118.60" width="2.9" height="3.10" fill="#000" stroke="#00ff00" stroke-width="0.68"/><line x1="213.35" y1="117.50" x2="213.35" y2="123.50" stroke="#00ff00" stroke-width="0.7"/><rect x="211.85" y="119.00" width="3" height="2.60" fill="#fff" stroke="#00ff00" stroke-width="0.55"/><line x1="218.39" y1="120.70" x2="218.39" y2="125.50" stroke="#00ff00" stroke-width="0.7"/><rect x="216.89" y="120.70" width="3" height="4.80" fill="#fff" stroke="#00ff00" stroke-width="0.55"/><line x1="223.44" y1="119.50" x2="223.44" y2="128.00" stroke="#00ff00" stroke-width="0.7"/><rect x="221.99" y="119.80" width="2.9" height="5.40" fill="#000" stroke="#00ff00" stroke-width="0.68"/><line x1="228.48" y1="118.30" x2="228.48" y2="121.30" stroke="#00ff00" stroke-width="0.7"/><rect x="227.03" y="118.60" width="2.9" height="2.40" fill="#000" stroke="#00ff00" stroke-width="0.68"/><line x1="233.52" y1="118.70" x2="233.52" y2="123.00" stroke="#00ff00" stroke-width="0.7"/><rect x="232.02" y="118.70" width="3" height="2.90" fill="#fff" stroke="#00ff00" stroke-width="0.55"/><line x1="238.57" y1="116.00" x2="238.57" y2="122.00" stroke="#00ff00" stroke-width="0.7"/><rect x="237.12" y="117.30" width="2.9" height="3.70" fill="#000" stroke="#00ff00" stroke-width="0.68"/><line x1="243.62" y1="116.00" x2="243.62" y2="121.50" stroke="#00ff00" stroke-width="0.7"/><rect x="242.12" y="117.50" width="3" height="2.90" fill="#fff" stroke="#00ff00" stroke-width="0.55"/><line x1="248.66" y1="114.70" x2="248.66" y2="120.00" stroke="#00ff00" stroke-width="0.7"/><rect x="247.21" y="117.30" width="2.9" height="2.40" fill="#000" stroke="#00c000" stroke-width="0.68"/><line x1="253.70" y1="115.50" x2="253.70" y2="123.00" stroke="#00ff00" stroke-width="0.7"/><rect x="252.20" y="116.80" width="3" height="3.60" fill="#fff" stroke="#00ff00" stroke-width="0.55"/><line x1="258.75" y1="113.00" x2="258.75" y2="120.00" stroke="#00ff00" stroke-width="0.7"/><rect x="257.30" y="116.30" width="2.9" height="3.40" fill="#000" stroke="#00c000" stroke-width="0.68"/><line x1="263.80" y1="109.30" x2="263.80" y2="117.70" stroke="#00ff00" stroke-width="0.7"/><rect x="262.30" y="116.00" width="3" height="1.70" fill="#fff" stroke="#00ff00" stroke-width="0.55"/><line x1="268.84" y1="116.00" x2="268.84" y2="121.30" stroke="#00ff00" stroke-width="0.7"/><rect x="267.34" y="116.00" width="3" height="1.70" fill="#fff" stroke="#00ff00" stroke-width="0.55"/><line x1="273.88" y1="116.00" x2="273.88" y2="119.50" stroke="#00ff00" stroke-width="0.7"/><rect x="272.38" y="116.00" width="3" height="3.50" fill="#fff" stroke="#00ff00" stroke-width="0.55"/><line x1="278.93" y1="119.00" x2="278.93" y2="122.00" stroke="#00ff00" stroke-width="0.7"/><rect x="277.43" y="119.00" width="3" height="3.00" fill="#fff" stroke="#00ff00" stroke-width="0.55"/><line x1="283.98" y1="115.60" x2="283.98" y2="122.00" stroke="#00ff00" stroke-width="0.7"/><rect x="282.53" y="115.90" width="2.9" height="5.80" fill="#000" stroke="#00ff00" stroke-width="0.68"/><line x1="289.02" y1="114.00" x2="289.02" y2="116.00" stroke="#00ff00" stroke-width="0.7"/><rect x="287.57" y="114.30" width="2.9" height="1.40" fill="#000" stroke="#00ff00" stroke-width="0.68"/><line x1="294.07" y1="114.00" x2="294.07" y2="126.00" stroke="#00ff00" stroke-width="0.7"/><rect x="292.57" y="114.00" width="3" height="7.60" fill="#fff" stroke="#00ff00" stroke-width="0.55"/><line x1="299.11" y1="112.00" x2="299.11" y2="123.60" stroke="#00ff00" stroke-width="0.7"/><rect x="297.66" y="114.30" width="2.9" height="7.40" fill="#000" stroke="#00ff00" stroke-width="0.68"/><line x1="304.15" y1="105.60" x2="304.15" y2="116.40" stroke="#00ff00" stroke-width="0.7"/><rect x="302.70" y="105.90" width="2.9" height="7.80" fill="#000" stroke="#00ff00" stroke-width="0.68"/><line x1="309.20" y1="95.00" x2="309.20" y2="107.00" stroke="#00ff00" stroke-width="0.7"/><rect x="307.70" y="105.60" width="3" height="1.40" fill="#fff" stroke="#00ff00" stroke-width="0.55"/><line x1="314.25" y1="94.00" x2="314.25" y2="109.60" stroke="#00ff00" stroke-width="0.7"/><rect x="312.80" y="99.30" width="2.9" height="8.00" fill="#000" stroke="#00ff00" stroke-width="0.68"/><line x1="319.29" y1="82.00" x2="319.29" y2="100.40" stroke="#00ff00" stroke-width="0.7"/><rect x="317.84" y="86.70" width="2.9" height="13.40" fill="#000" stroke="#00ff00" stroke-width="0.68"/><line x1="324.34" y1="82.00" x2="324.34" y2="91.00" stroke="#00ff00" stroke-width="0.7"/><rect x="322.89" y="85.30" width="2.9" height="2.40" fill="#000" stroke="#00ff00" stroke-width="0.68"/><line x1="329.38" y1="68.00" x2="329.38" y2="86.00" stroke="#00ff00" stroke-width="0.7"/><rect x="327.93" y="71.90" width="2.9" height="13.80" fill="#000" stroke="#00ff00" stroke-width="0.68"/><line x1="334.42" y1="65.00" x2="334.42" y2="73.00" stroke="#00ff00" stroke-width="0.7"/><rect x="332.97" y="70.30" width="2.9" height="2.40" fill="#000" stroke="#00ff00" stroke-width="0.68"/><line x1="339.47" y1="67.00" x2="339.47" y2="74.00" stroke="#00ff00" stroke-width="0.7"/><rect x="338.02" y="68.70" width="2.9" height="3.00" fill="#000" stroke="#00ff00" stroke-width="0.68"/><line x1="344.51" y1="62.00" x2="344.51" y2="70.00" stroke="#00ff00" stroke-width="0.7"/><rect x="343.06" y="64.70" width="2.9" height="4.00" fill="#000" stroke="#00ff00" stroke-width="0.68"/><line x1="349.56" y1="63.00" x2="349.56" y2="77.00" stroke="#00ff00" stroke-width="0.7"/><rect x="348.06" y="65.00" width="3" height="12.00" fill="#fff" stroke="#00ff00" stroke-width="0.55"/><line x1="354.61" y1="71.60" x2="354.61" y2="81.00" stroke="#00ff00" stroke-width="0.7"/><rect x="353.16" y="71.90" width="2.9" height="5.40" fill="#000" stroke="#00ff00" stroke-width="0.68"/><line x1="359.65" y1="68.40" x2="359.65" y2="73.60" stroke="#00ff00" stroke-width="0.7"/><rect x="358.15" y="71.60" width="3" height="2.00" fill="#fff" stroke="#00ff00" stroke-width="0.55"/><line x1="364.69" y1="72.00" x2="364.69" y2="79.60" stroke="#00ff00" stroke-width="0.7"/><rect x="363.19" y="72.00" width="3" height="5.00" fill="#fff" stroke="#00ff00" stroke-width="0.55"/><line x1="369.74" y1="70.00" x2="369.74" y2="77.00" stroke="#00ff00" stroke-width="0.7"/><rect x="368.29" y="70.30" width="2.9" height="6.40" fill="#000" stroke="#00c000" stroke-width="0.68"/><line x1="374.78" y1="67.00" x2="374.78" y2="73.60" stroke="#00ff00" stroke-width="0.7"/><rect x="373.33" y="67.30" width="2.9" height="3.00" fill="#000" stroke="#00ff00" stroke-width="0.68"/><line x1="379.83" y1="64.00" x2="379.83" y2="69.60" stroke="#00ff00" stroke-width="0.7"/><rect x="378.23" y="67.00" width="3.2" height="1.60" fill="#00ff00"/><line x1="384.88" y1="64.00" x2="384.88" y2="68.00" stroke="#00ff00" stroke-width="0.7"/><rect x="383.38" y="65.30" width="3" height="2.70" fill="#fff" stroke="#00ff00" stroke-width="0.55"/><line x1="389.92" y1="67.00" x2="389.92" y2="73.60" stroke="#00ff00" stroke-width="0.7"/><rect x="388.42" y="67.00" width="3" height="3.60" fill="#fff" stroke="#00ff00" stroke-width="0.55"/><line x1="394.96" y1="68.00" x2="394.96" y2="72.00" stroke="#00ff00" stroke-width="0.7"/><rect x="393.51" y="68.30" width="2.9" height="2.40" fill="#000" stroke="#00ff00" stroke-width="0.68"/><line x1="400.01" y1="68.60" x2="400.01" y2="76.60" stroke="#00ff00" stroke-width="0.7"/><rect x="398.51" y="68.60" width="3" height="8.00" fill="#fff" stroke="#00ff00" stroke-width="0.55"/><line x1="405.06" y1="70.00" x2="405.06" y2="79.00" stroke="#00ff00" stroke-width="0.7"/><rect x="403.56" y="75.60" width="3" height="3.40" fill="#fff" stroke="#00ff00" stroke-width="0.55"/><line x1="410.10" y1="72.00" x2="410.10" y2="79.00" stroke="#00ff00" stroke-width="0.7"/><rect x="408.65" y="74.30" width="2.9" height="4.40" fill="#000" stroke="#00ff00" stroke-width="0.68"/><line x1="415.14" y1="69.00" x2="415.14" y2="75.60" stroke="#00ff00" stroke-width="0.7"/><rect x="413.69" y="72.30" width="2.9" height="3.00" fill="#000" stroke="#00ff00" stroke-width="0.68"/><line x1="420.19" y1="69.00" x2="420.19" y2="75.30" stroke="#00ff00" stroke-width="0.7"/><rect x="418.69" y="72.00" width="3" height="3.30" fill="#fff" stroke="#00ff00" stroke-width="0.55"/><line x1="425.24" y1="71.00" x2="425.24" y2="77.00" stroke="#00ff00" stroke-width="0.7"/><rect x="423.63" y="74.00" width="3.2" height="1.60" fill="#00ff00"/><line x1="430.28" y1="72.00" x2="430.28" y2="75.60" stroke="#00ff00" stroke-width="0.7"/><rect x="428.68" y="73.60" width="3.2" height="2.00" fill="#00ff00"/><line x1="435.33" y1="74.00" x2="435.33" y2="77.60" stroke="#00ff00" stroke-width="0.7"/><rect x="433.83" y="74.00" width="3" height="3.60" fill="#fff" stroke="#00ff00" stroke-width="0.55"/><line x1="440.37" y1="76.00" x2="440.37" y2="79.00" stroke="#00ff00" stroke-width="0.7"/><rect x="438.87" y="76.00" width="3" height="3.00" fill="#fff" stroke="#00ff00" stroke-width="0.55"/><line x1="445.41" y1="70.00" x2="445.41" y2="78.60" stroke="#00ff00" stroke-width="0.7"/><rect x="443.96" y="71.90" width="2.9" height="6.40" fill="#000" stroke="#00ff00" stroke-width="0.68"/><line x1="450.46" y1="66.60" x2="450.46" y2="72.60" stroke="#00ff00" stroke-width="0.7"/><rect x="449.01" y="68.30" width="2.9" height="4.00" fill="#000" stroke="#00ff00" stroke-width="0.68"/><line x1="455.50" y1="65.00" x2="455.50" y2="70.00" stroke="#00ff00" stroke-width="0.7"/><rect x="454.06" y="66.30" width="2.9" height="2.40" fill="#000" stroke="#00ff00" stroke-width="0.68"/><line x1="460.55" y1="64.00" x2="460.55" y2="68.00" stroke="#00ff00" stroke-width="0.7"/><rect x="459.10" y="64.90" width="2.9" height="2.10" fill="#000" stroke="#00ff00" stroke-width="0.68"/><line x1="465.60" y1="59.50" x2="465.60" y2="67.00" stroke="#00ff00" stroke-width="0.7"/><rect x="464.15" y="62.30" width="2.9" height="3.00" fill="#000" stroke="#00ff00" stroke-width="0.68"/><line x1="470.64" y1="58.00" x2="470.64" y2="63.40" stroke="#00ff00" stroke-width="0.7"/><rect x="469.19" y="61.30" width="2.9" height="1.80" fill="#000" stroke="#00ff00" stroke-width="0.68"/><line x1="475.68" y1="55.00" x2="475.68" y2="62.70" stroke="#00ff00" stroke-width="0.7"/><rect x="474.23" y="55.30" width="2.9" height="7.10" fill="#000" stroke="#00ff00" stroke-width="0.68"/><line x1="480.73" y1="43.00" x2="480.73" y2="56.30" stroke="#00ff00" stroke-width="0.7"/><rect x="479.28" y="44.90" width="2.9" height="11.10" fill="#000" stroke="#00ff00" stroke-width="0.68"/><line x1="485.77" y1="37.00" x2="485.77" y2="46.60" stroke="#00ff00" stroke-width="0.7"/><rect x="484.32" y="40.90" width="2.9" height="4.40" fill="#000" stroke="#00ff00" stroke-width="0.68"/><line x1="490.82" y1="35.00" x2="490.82" y2="45.70" stroke="#00ff00" stroke-width="0.7"/><rect x="489.37" y="36.30" width="2.9" height="4.90" fill="#000" stroke="#00ff00" stroke-width="0.68"/><line x1="495.87" y1="34.00" x2="495.87" y2="39.60" stroke="#00ff00" stroke-width="0.7"/><rect x="494.37" y="36.40" width="3" height="2.20" fill="#fff" stroke="#00ff00" stroke-width="0.55"/><line x1="500.91" y1="26.00" x2="500.91" y2="38.60" stroke="#00ff00" stroke-width="0.7"/><rect x="499.46" y="27.90" width="2.9" height="10.40" fill="#000" stroke="#00ff00" stroke-width="0.68"/><line x1="505.95" y1="20.00" x2="505.95" y2="29.60" stroke="#00ff00" stroke-width="0.7"/><rect x="504.50" y="24.60" width="2.9" height="2.70" fill="#000" stroke="#00ff00" stroke-width="0.68"/><line x1="511.00" y1="20.00" x2="511.00" y2="27.60" stroke="#00ff00" stroke-width="0.7"/><rect x="509.55" y="22.60" width="2.9" height="1.70" fill="#000" stroke="#00ff00" stroke-width="0.68"/><line x1="516.05" y1="20.00" x2="516.05" y2="27.00" stroke="#00ff00" stroke-width="0.7"/><rect x="514.55" y="22.00" width="3" height="4.00" fill="#fff" stroke="#00ff00" stroke-width="0.55"/><line x1="521.09" y1="25.00" x2="521.09" y2="31.60" stroke="#00ff00" stroke-width="0.7"/><rect x="519.59" y="25.00" width="3" height="6.60" fill="#fff" stroke="#00ff00" stroke-width="0.55"/><line x1="526.13" y1="20.00" x2="526.13" y2="34.30" stroke="#00ff00" stroke-width="0.7"/><rect x="524.68" y="22.60" width="2.9" height="8.70" fill="#000" stroke="#00ff00" stroke-width="0.68"/><line x1="531.18" y1="14.00" x2="531.18" y2="26.00" stroke="#00ff00" stroke-width="0.7"/><rect x="529.73" y="19.30" width="2.9" height="4.00" fill="#000" stroke="#00ff00" stroke-width="0.68"/><line x1="536.23" y1="15.00" x2="536.23" y2="21.00" stroke="#00ff00" stroke-width="0.7"/><rect x="534.62" y="19.00" width="3.2" height="1.00" fill="#00ff00"/><line x1="541.27" y1="8.50" x2="541.27" y2="27.00" stroke="#00ff00" stroke-width="0.7"/><rect x="539.82" y="14.30" width="2.9" height="5.00" fill="#000" stroke="#00ff00" stroke-width="0.68"/><line x1="546.31" y1="10.00" x2="546.31" y2="52.50" stroke="#00ff00" stroke-width="0.7"/><rect x="544.81" y="14.00" width="3" height="37.00" fill="#fff" stroke="#00ff00" stroke-width="0.55"/><line x1="551.36" y1="33.00" x2="551.36" y2="65.00" stroke="#00ff00" stroke-width="0.7"/><rect x="549.86" y="51.20" width="3" height="8.30" fill="#fff" stroke="#00ff00" stroke-width="0.55"/><line x1="556.40" y1="54.00" x2="556.40" y2="73.60" stroke="#00ff00" stroke-width="0.7"/><rect x="554.80" y="59.00" width="3.2" height="1.50" fill="#00ff00"/><line x1="561.45" y1="59.00" x2="561.45" y2="85.70" stroke="#00ff00" stroke-width="0.7"/><rect x="559.95" y="59.00" width="3" height="7.30" fill="#fff" stroke="#00ff00" stroke-width="0.55"/><line x1="566.50" y1="58.00" x2="566.50" y2="74.60" stroke="#00ff00" stroke-width="0.7"/><rect x="564.89" y="65.50" width="3.2" height="1.50" fill="#00ff00"/><line x1="571.54" y1="52.00" x2="571.54" y2="66.60" stroke="#00ff00" stroke-width="0.7"/><rect x="570.09" y="55.60" width="2.9" height="10.70" fill="#000" stroke="#00ff00" stroke-width="0.68"/><line x1="576.59" y1="48.00" x2="576.59" y2="58.60" stroke="#00ff00" stroke-width="0.7"/><rect x="575.13" y="55.30" width="2.9" height="1.40" fill="#000" stroke="#00ff00" stroke-width="0.68"/><line x1="581.63" y1="51.00" x2="581.63" y2="59.00" stroke="#00ff00" stroke-width="0.7"/><rect x="580.03" y="55.00" width="3.2" height="1.30" fill="#00ff00"/><line x1="586.67" y1="51.00" x2="586.67" y2="59.60" stroke="#00ff00" stroke-width="0.7"/><rect x="585.07" y="54.30" width="3.2" height="1.70" fill="#00ff00"/><line x1="591.72" y1="52.00" x2="591.72" y2="56.60" stroke="#00ff00" stroke-width="0.7"/><rect x="590.12" y="54.00" width="3.2" height="1.30" fill="#00ff00"/><line x1="596.76" y1="49.00" x2="596.76" y2="58.60" stroke="#00ff00" stroke-width="0.7"/><rect x="595.26" y="54.30" width="3" height="2.70" fill="#fff" stroke="#00ff00" stroke-width="0.55"/><line x1="601.81" y1="49.00" x2="601.81" y2="61.00" stroke="#00ff00" stroke-width="0.7"/><rect x="600.36" y="51.80" width="2.9" height="4.90" fill="#000" stroke="#00c000" stroke-width="0.68"/><line x1="606.86" y1="48.00" x2="606.86" y2="52.50" stroke="#00ff00" stroke-width="0.7"/><rect x="605.40" y="49.50" width="2.9" height="2.70" fill="#000" stroke="#00ff00" stroke-width="0.68"/><line x1="611.90" y1="48.00" x2="611.90" y2="53.00" stroke="#00ff00" stroke-width="0.7"/><rect x="610.40" y="49.20" width="3" height="2.80" fill="#fff" stroke="#00ff00" stroke-width="0.55"/><rect x="2.4" y="125.4" width="1.2" height="0.8" fill="#00ff00"/></svg>
<div style="left:972.6px;top:33.15px;width:2.6px;height:0.7px;background:#f0f0f0;"></div>
<div class="c" style="left:976.2px;top:29.55px;font-size:6.3px;letter-spacing:-0.311px;color:#f2f2f2;">4354.90</div>
<div style="left:972.6px;top:53.449999999999996px;width:2.6px;height:0.7px;background:#f0f0f0;"></div>
<div class="c" style="left:976.2px;top:49.849999999999994px;font-size:6.3px;letter-spacing:-0.311px;color:#f2f2f2;">4329.50</div>
<div style="left:972.6px;top:73.75px;width:2.6px;height:0.7px;background:#f0f0f0;"></div>
<div class="c" style="left:976.2px;top:70.14999999999999px;font-size:6.3px;letter-spacing:-0.311px;color:#f2f2f2;">4304.10</div>
<div style="left:972.6px;top:94.05000000000001px;width:2.6px;height:0.7px;background:#f0f0f0;"></div>
<div class="c" style="left:976.2px;top:90.45px;font-size:6.3px;letter-spacing:-0.311px;color:#f2f2f2;">4278.70</div>
<div style="left:972.6px;top:114.35000000000001px;width:2.6px;height:0.7px;background:#f0f0f0;"></div>
<div class="c" style="left:976.2px;top:110.75px;font-size:6.3px;letter-spacing:-0.311px;color:#f2f2f2;">4253.30</div>
<div style="left:972.6px;top:134.65px;width:2.6px;height:0.7px;background:#f0f0f0;"></div>
<div class="c" style="left:976.2px;top:131.05px;font-size:6.3px;letter-spacing:-0.311px;color:#f2f2f2;">4227.90</div>
<div style="left:972.6px;top:154.95000000000002px;width:2.6px;height:0.7px;background:#f0f0f0;"></div>
<div class="c" style="left:976.2px;top:151.35000000000002px;font-size:6.3px;letter-spacing:-0.311px;color:#f2f2f2;">4202.50</div>
<div style="left:973.6px;top:73.8px;width:26.4px;height:7.6px;background:#8c9db2;"></div>
<div class="c" style="left:976.2px;top:73.7px;font-size:6.3px;letter-spacing:-0.311px;color:#000;">4300.01</div>
<div class="c" style="left:928.6px;top:30.5px;font-size:6.2px;letter-spacing:-0.782px;color:#f0f0f0;">GOLDPRO1</div>
<svg style="left:960.4px;top:30.4px" width="11" height="9" viewBox="0 0 11 9" ><path d="M0.8 3 L5.4 0.8 L10 3 L5.4 5.2 Z" fill="#f4f4f4"/><path d="M2.8 4.4 V6.6 C4 7.8 6.8 7.8 8 6.6 V4.4 L5.4 5.8 Z" fill="#e8e8e8"/><path d="M1.3 3.2 V7.6" stroke="#e8e8e8" stroke-width="0.7"/></svg>
<svg style="left:829.5px;top:27.6px" width="7" height="3" viewBox="0 0 7 3" ><path d="M0.4 0 H6.2 L3.3 2.6 Z" fill="#7f8fa3"/></svg>
<div class="c" style="left:223.4px;top:176.6px;font-size:6.2px;letter-spacing:-0.233px;color:#f0f0f0;">10 Dec 2025</div>
<div style="left:263.40999999999997px;top:174.4px;width:0.7px;height:3.2px;background:#f0f0f0;"></div>
<div class="c" style="left:263.36px;top:176.6px;font-size:6.2px;letter-spacing:-0.224px;color:#f0f0f0;">10 Dec 13:00</div>
<div style="left:303.77px;top:174.4px;width:0.7px;height:3.2px;background:#f0f0f0;"></div>
<div class="c" style="left:303.72px;top:176.6px;font-size:6.2px;letter-spacing:-0.224px;color:#f0f0f0;">10 Dec 17:00</div>
<div style="left:344.13px;top:174.4px;width:0.7px;height:3.2px;background:#f0f0f0;"></div>
<div class="c" style="left:344.08000000000004px;top:176.6px;font-size:6.2px;letter-spacing:-0.224px;color:#f0f0f0;">10 Dec 21:00</div>
<div style="left:384.49px;top:174.4px;width:0.7px;height:3.2px;background:#f0f0f0;"></div>
<div class="c" style="left:384.44000000000005px;top:176.6px;font-size:6.2px;letter-spacing:-0.185px;color:#f0f0f0;">11 Dec 02:00</div>
<div style="left:424.85px;top:174.4px;width:0.7px;height:3.2px;background:#f0f0f0;"></div>
<div class="c" style="left:424.80000000000007px;top:176.6px;font-size:6.2px;letter-spacing:-0.185px;color:#f0f0f0;">11 Dec 06:00</div>
<div style="left:465.21px;top:174.4px;width:0.7px;height:3.2px;background:#f0f0f0;"></div>
<div class="c" style="left:465.16px;top:176.6px;font-size:6.2px;letter-spacing:-0.185px;color:#f0f0f0;">11 Dec 10:00</div>
<div style="left:505.56999999999994px;top:174.4px;width:0.7px;height:3.2px;background:#f0f0f0;"></div>
<div class="c" style="left:505.52px;top:176.6px;font-size:6.2px;letter-spacing:-0.185px;color:#f0f0f0;">11 Dec 14:00</div>
<div style="left:545.93px;top:174.4px;width:0.7px;height:3.2px;background:#f0f0f0;"></div>
<div class="c" style="left:545.88px;top:176.6px;font-size:6.2px;letter-spacing:-0.185px;color:#f0f0f0;">11 Dec 18:00</div>
<div style="left:586.29px;top:174.4px;width:0.7px;height:3.2px;background:#f0f0f0;"></div>
<div class="c" style="left:586.24px;top:176.6px;font-size:6.2px;letter-spacing:-0.185px;color:#f0f0f0;">11 Dec 22:00</div>
<div style="left:626.65px;top:174.4px;width:0.7px;height:3.2px;background:#f0f0f0;"></div>
<div class="c" style="left:626.6px;top:176.6px;font-size:6.2px;letter-spacing:-0.224px;color:#f0f0f0;">12 Dec 03:00</div>
<div style="left:667.01px;top:174.4px;width:0.7px;height:3.2px;background:#f0f0f0;"></div>
<div class="c" style="left:666.96px;top:176.6px;font-size:6.2px;letter-spacing:-0.224px;color:#f0f0f0;">12 Dec 07:00</div>
<div style="left:707.37px;top:174.4px;width:0.7px;height:3.2px;background:#f0f0f0;"></div>
<div class="c" style="left:707.32px;top:176.6px;font-size:6.2px;letter-spacing:-0.185px;color:#f0f0f0;">12 Dec 11:00</div>
<div style="left:747.7299999999999px;top:174.4px;width:0.7px;height:3.2px;background:#f0f0f0;"></div>
<div class="c" style="left:747.68px;top:176.6px;font-size:6.2px;letter-spacing:-0.224px;color:#f0f0f0;">12 Dec 15:00</div>
<div style="left:788.0899999999999px;top:174.4px;width:0.7px;height:3.2px;background:#f0f0f0;"></div>
<div class="c" style="left:788.04px;top:176.6px;font-size:6.2px;letter-spacing:-0.224px;color:#f0f0f0;">12 Dec 19:00</div>
<div style="left:828.4499999999999px;top:174.4px;width:0.7px;height:3.2px;background:#f0f0f0;"></div>
<div class="c" style="left:828.4px;top:176.6px;font-size:6.2px;letter-spacing:-0.224px;color:#f0f0f0;">12 Dec 23:00</div>
<svg style="left:226.2px;top:30.9px" width="10" height="7" viewBox="0 0 10 7" ><rect x="0.2" y="0.2" width="4.8" height="6.6" fill="#e23a3a"/><rect x="5" y="0.2" width="4.8" height="6.6" fill="#2a78d0"/><path d="M0.8 1.9 H9.4 M0.8 3.6 H9.4 M0.8 5.3 H9.4" stroke="#fff" stroke-width="0.75" opacity="0.9"/><path d="M5 0.2 V6.8" stroke="#7a5a9a" stroke-width="0.4"/></svg>
<svg style="left:239.9px;top:30.9px" width="10" height="7" viewBox="0 0 10 7" ><rect x="0.2" y="0.2" width="4.6" height="6.6" fill="#e8483a"/><rect x="4.8" y="0.2" width="4.8" height="6.6" fill="#2a88e0"/><rect x="1.6" y="0.2" width="2" height="3.6" fill="#fff"/><rect x="2.6" y="3.8" width="1.2" height="3" fill="#ffd0c8"/><rect x="4.2" y="0.2" width="2.4" height="1.4" fill="#444"/><rect x="6.4" y="0.2" width="1.8" height="4" fill="#fff"/><rect x="5.2" y="2.6" width="1.2" height="4.2" fill="#bfe0ff"/></svg>
<div class="c" style="left:252px;top:30.349999999999998px;font-size:5.9px;letter-spacing:-0.118px;color:#dcdcdc;color:#f2f2f2;">XAUUSD., M30:&nbsp; Gold vs US Dollar</div>
<div style="left:228.2px;top:43.150000000000006px;width:4.7px;height:4.3px;border:0.5px solid #858585;"></div>
<div class="c" style="left:235.8px;top:41.150000000000006px;font-size:5.9px;letter-spacing:-0.030px;color:#dcdcdc;">Lợi nhuận hôm nay: 0.00 $</div>
<div style="left:228.2px;top:50.050000000000004px;width:4.7px;height:4.3px;border:0.5px solid #858585;"></div>
<div class="c" style="left:235.8px;top:48.050000000000004px;font-size:5.9px;letter-spacing:-0.017px;color:#dcdcdc;">Lỗ hôm nay: 0.00 $</div>
<div class="c" style="left:235.8px;top:55.150000000000006px;font-size:5.9px;letter-spacing:0.307px;color:#dcdcdc;color:#b8b8b8;">Trạng thái EA:</div>
<div style="left:281.2px;top:57.150000000000006px;width:4.7px;height:4.3px;border:0.5px solid #858585;"></div>
<div class="c" style="left:289px;top:55.150000000000006px;font-size:5.9px;letter-spacing:-0.509px;color:#dcdcdc;">ĐANG CHẠY</div>
<div class="c" style="left:226.3px;top:54.400000000000006px;font-size:8.0px;letter-spacing:0.123px;line-height:10px;color:#e4e4e4;">TẮT EA</div>
<div style="left:228.2px;top:63.75px;width:4.7px;height:4.3px;border:0.5px solid #858585;"></div>
<div style="left:234.4px;top:63.75px;width:4.7px;height:4.3px;border:0.5px solid #858585;"></div>
<div class="c" style="left:240.8px;top:61.75px;font-size:5.9px;letter-spacing:-0.259px;color:#dcdcdc;">HEDGE INACTIVE</div>
<div style="left:228.2px;top:70.44999999999999px;width:4.7px;height:4.3px;border:0.5px solid #858585;"></div>
<div style="left:234.4px;top:70.44999999999999px;width:4.7px;height:4.3px;border:0.5px solid #858585;"></div>
<div class="c" style="left:240.8px;top:68.45px;font-size:5.9px;letter-spacing:-0.260px;color:#dcdcdc;">PARTIAL CLOSE ON</div>
<div style="left:230.1px;top:75.2px;width:113.8px;height:15.6px;background:#228b22;border-top:0.7px solid #46aa46;border-left:0.6px solid #46aa46;border-bottom:1px solid #155c15;border-right:0.9px solid #155c15;"></div>
<div class="btn" style="left:230.1px;top:77.90px;width:113.8px;"><span style="display:inline-block;width:3.6px;height:4.4px;border:0.6px solid #1a6a1a;box-sizing:border-box;margin-right:3px;vertical-align:-0.2px;"></span>EA Đang Chạy</div>
<div style="left:230.1px;top:94.3px;width:113.8px;height:15.2px;background:#b22222;border-top:0.7px solid #cf4a4a;border-left:0.6px solid #cf4a4a;border-bottom:1px solid #741414;border-right:0.9px solid #741414;"></div>
<div class="btn" style="left:230.1px;top:96.80px;width:113.8px;"><span style="display:inline-block;width:3.6px;height:4.4px;border:0.6px solid #8e2a1e;box-sizing:border-box;margin-right:3px;vertical-align:-0.2px;"></span>Đóng Tất Cả Lệnh</div>
<div class="t" style="left:230.2px;top:113.0px;font-size:7.6px;line-height:10px;color:#c8c8c8;letter-spacing:0;-webkit-text-stroke:0;">--- Đóng Theo Hướng ---</div>
<div style="left:230.1px;top:125px;width:54.7px;height:15.6px;background:#1e90ff;border-top:0.7px solid #55acff;border-left:0.6px solid #55acff;border-bottom:1px solid #1568c4;border-right:0.9px solid #1568c4;"></div>
<div class="btn" style="left:230.1px;top:127.70px;width:54.7px;"><span style="display:inline-block;width:3.6px;height:4.4px;border:0.6px solid #1a6cc8;box-sizing:border-box;margin-right:3px;vertical-align:-0.2px;"></span>Close BUY</div>
<div style="left:287.8px;top:125px;width:55.4px;height:15.6px;background:#ff4500;border-top:0.7px solid #ff7040;border-left:0.6px solid #ff7040;border-bottom:1px solid #c43400;border-right:0.9px solid #c43400;"></div>
<div class="btn" style="left:287.8px;top:127.70px;width:55.4px;"><span style="display:inline-block;width:3.6px;height:4.4px;border:0.6px solid #c8400e;box-sizing:border-box;margin-right:3px;vertical-align:-0.2px;"></span>Close SELL</div>
<div style="left:230.1px;top:144px;width:113.5px;height:15.8px;background:#808080;border-top:0.7px solid #9c9c9c;border-left:0.6px solid #9c9c9c;border-bottom:1px solid #5c5c5c;border-right:0.9px solid #5c5c5c;"></div>
<div class="btn" style="left:230.1px;top:146.80px;width:113.5px;"><span style="display:inline-block;width:3.6px;height:4.4px;border:0.6px solid #6c6c6c;box-sizing:border-box;margin-right:3px;vertical-align:-0.2px;"></span>Ẩn Panel</div>
<div style="left:222px;top:188px;width:778px;height:15.2px;background:#f0f0f0;"></div>
<div style="left:224.4px;top:187.6px;width:60.4px;height:12.3px;background:#fff;border:1px solid #111;border-top:none;"></div>
<div class="t" style="left:231px;top:189.6px;font-size:7.3px;letter-spacing:-0.153px;color:#1a1a1a;">XAUUSD.,M30</div>
<div class="t" style="left:293px;top:189.6px;color:#8a8a8a;-webkit-text-stroke:0.1px;font-size:7.3px;letter-spacing:-0.162px;">XAUUSD.,M5</div>
<div style="left:343.2px;top:190.4px;width:0.7px;height:8px;background:#a0a0a0;"></div>
<div class="t" style="left:352px;top:189.6px;color:#8a8a8a;-webkit-text-stroke:0.1px;font-size:7.3px;letter-spacing:-0.207px;">XAUUSD.,M15</div>
<div style="left:405px;top:190.4px;width:0.7px;height:8px;background:#a0a0a0;"></div>
<div class="t" style="left:413px;top:189.6px;color:#8a8a8a;-webkit-text-stroke:0.1px;font-size:7.3px;letter-spacing:-0.207px;">XAUUSD.,M15</div>
<div style="left:466px;top:190.4px;width:0.7px;height:8px;background:#a0a0a0;"></div>
<svg style="left:473.6px;top:189.2px" width="11" height="10" viewBox="0 0 11 10" ><path d="M2.8 6 C0.9 6 0.8 3.7 2.6 3.5 C2.8 1.2 6.2 0.7 7 2.8 C9.4 2.4 10 6 7.9 6 Z" fill="#e6f1fb" stroke="#2a78c8" stroke-width="0.9"/><path d="M1.6 8.4 H9.4 M5.5 6.2 V8.4" stroke="#2a78c8" stroke-width="0.9"/></svg>
<div class="t" style="left:487px;top:189.6px;color:#8a8a8a;-webkit-text-stroke:0.1px;font-size:7.3px;letter-spacing:-0.736px;">VPS</div>
<svg style="left:981px;top:192px" width="4" height="5" viewBox="0 0 4 5" ><path d="M3 0.6 L0.8 2.5 L3 4.4 Z" fill="#b4b4b4"/></svg>
<svg style="left:994px;top:192px" width="4" height="5" viewBox="0 0 4 5" ><path d="M1 0.6 L3.2 2.5 L1 4.4 Z" fill="#b4b4b4"/></svg>
<div style="left:0px;top:203.2px;width:6.9px;height:281px;background:#bfcddb;"></div>
<div style="left:6.9px;top:203.2px;width:993.1px;height:284.4px;background:#fff;"></div>
<div style="left:6.9px;top:231.32999999999998px;width:988.4px;height:12.63px;background:#ebebeb;"></div>
<div style="left:6.9px;top:230.98px;width:988.4px;height:0.7px;background:#d9d9d9;"></div>
<div style="left:6.9px;top:243.60999999999999px;width:988.4px;height:0.7px;background:#d9d9d9;"></div>
<div style="left:6.9px;top:256.59px;width:988.4px;height:12.63px;background:#ebebeb;"></div>
<div style="left:6.9px;top:256.23999999999995px;width:988.4px;height:0.7px;background:#d9d9d9;"></div>
<div style="left:6.9px;top:268.86999999999995px;width:988.4px;height:0.7px;background:#d9d9d9;"></div>
<div style="left:6.9px;top:281.85px;width:988.4px;height:12.63px;background:#ebebeb;"></div>
<div style="left:6.9px;top:281.5px;width:988.4px;height:0.7px;background:#d9d9d9;"></div>
<div style="left:6.9px;top:294.13px;width:988.4px;height:0.7px;background:#d9d9d9;"></div>
<div style="left:6.9px;top:307.11px;width:988.4px;height:12.63px;background:#ebebeb;"></div>
<div style="left:6.9px;top:306.76px;width:988.4px;height:0.7px;background:#d9d9d9;"></div>
<div style="left:6.9px;top:319.39px;width:988.4px;height:0.7px;background:#d9d9d9;"></div>
<div style="left:6.9px;top:332.37px;width:988.4px;height:12.63px;background:#ebebeb;"></div>
<div style="left:6.9px;top:332.02px;width:988.4px;height:0.7px;background:#d9d9d9;"></div>
<div style="left:6.9px;top:344.65px;width:988.4px;height:0.7px;background:#d9d9d9;"></div>
<div style="left:6.9px;top:357.63px;width:988.4px;height:12.63px;background:#ebebeb;"></div>
<div style="left:6.9px;top:357.28px;width:988.4px;height:0.7px;background:#d9d9d9;"></div>
<div style="left:6.9px;top:369.90999999999997px;width:988.4px;height:0.7px;background:#d9d9d9;"></div>
<div style="left:6.9px;top:382.89px;width:988.4px;height:12.63px;background:#ebebeb;"></div>
<div style="left:6.9px;top:382.53999999999996px;width:988.4px;height:0.7px;background:#d9d9d9;"></div>
<div style="left:6.9px;top:395.16999999999996px;width:988.4px;height:0.7px;background:#d9d9d9;"></div>
<div style="left:6.9px;top:408.15px;width:988.4px;height:12.63px;background:#ebebeb;"></div>
<div style="left:6.9px;top:407.79999999999995px;width:988.4px;height:0.7px;background:#d9d9d9;"></div>
<div style="left:6.9px;top:420.42999999999995px;width:988.4px;height:0.7px;background:#d9d9d9;"></div>
<div style="left:6.9px;top:433.40999999999997px;width:988.4px;height:12.63px;background:#ebebeb;"></div>
<div style="left:6.9px;top:433.05999999999995px;width:988.4px;height:0.7px;background:#d9d9d9;"></div>
<div style="left:6.9px;top:445.68999999999994px;width:988.4px;height:0.7px;background:#d9d9d9;"></div>
<div style="left:6.9px;top:458.67px;width:988.4px;height:12.63px;background:#ebebeb;"></div>
<div style="left:6.9px;top:458.32px;width:988.4px;height:0.7px;background:#d9d9d9;"></div>
<div style="left:6.9px;top:471.0px;width:988.4px;height:0.6px;background:#d6d6d6;"></div>
<div style="left:107.8px;top:218.7px;width:0.8px;height:252.60000000000002px;background:#dadada;"></div>
<div style="left:107.8px;top:203.79999999999998px;width:0.8px;height:15.3px;background:#b9b9b9;"></div>
<div style="left:181.1px;top:218.7px;width:0.8px;height:252.60000000000002px;background:#dadada;"></div>
<div style="left:181.1px;top:203.79999999999998px;width:0.8px;height:15.3px;background:#b9b9b9;"></div>
<div style="left:236.9px;top:218.7px;width:0.8px;height:252.60000000000002px;background:#dadada;"></div>
<div style="left:236.9px;top:203.79999999999998px;width:0.8px;height:15.3px;background:#b9b9b9;"></div>
<div style="left:285.20000000000005px;top:218.7px;width:0.8px;height:252.60000000000002px;background:#dadada;"></div>
<div style="left:285.20000000000005px;top:203.79999999999998px;width:0.8px;height:15.3px;background:#b9b9b9;"></div>
<div style="left:365.20000000000005px;top:218.7px;width:0.8px;height:252.60000000000002px;background:#dadada;"></div>
<div style="left:365.20000000000005px;top:203.79999999999998px;width:0.8px;height:15.3px;background:#b9b9b9;"></div>
<div style="left:446.1px;top:218.7px;width:0.8px;height:252.60000000000002px;background:#dadada;"></div>
<div style="left:446.1px;top:203.79999999999998px;width:0.8px;height:15.3px;background:#b9b9b9;"></div>
<div style="left:527.1px;top:218.7px;width:0.8px;height:252.60000000000002px;background:#dadada;"></div>
<div style="left:527.1px;top:203.79999999999998px;width:0.8px;height:15.3px;background:#b9b9b9;"></div>
<div style="left:608.1px;top:218.7px;width:0.8px;height:252.60000000000002px;background:#dadada;"></div>
<div style="left:608.1px;top:203.79999999999998px;width:0.8px;height:15.3px;background:#b9b9b9;"></div>
<div style="left:696.1px;top:218.7px;width:0.8px;height:252.60000000000002px;background:#dadada;"></div>
<div style="left:696.1px;top:203.79999999999998px;width:0.8px;height:15.3px;background:#b9b9b9;"></div>
<div style="left:777.1px;top:218.7px;width:0.8px;height:252.60000000000002px;background:#dadada;"></div>
<div style="left:777.1px;top:203.79999999999998px;width:0.8px;height:15.3px;background:#b9b9b9;"></div>
<div style="left:931.1px;top:218.7px;width:0.8px;height:252.60000000000002px;background:#dadada;"></div>
<div style="left:931.1px;top:203.79999999999998px;width:0.8px;height:15.3px;background:#b9b9b9;"></div>
<div style="left:995.3px;top:203.2px;width:4.7px;height:268.1px;background:#fafafa;"></div>
<div class="n" style="left:12.2px;top:207.1px;font-size:7.0px;letter-spacing:0.026px;">Time</div>
<div class="n" style="left:152.8px;top:207.1px;font-size:7.0px;letter-spacing:0.226px;">Symbol</div>
<div class="n" style="left:214.4px;top:207.1px;font-size:7.0px;letter-spacing:0.115px;">Ticket</div>
<div class="n" style="left:267px;top:207.1px;font-size:7.0px;letter-spacing:-0.069px;">Type</div>
<div class="n" style="left:337.5px;top:207.1px;font-size:7.0px;letter-spacing:0.275px;">Volume</div>
<div class="n" style="left:427px;top:207.1px;font-size:7.0px;letter-spacing:0.030px;">Price</div>
<div class="n" style="left:509.4px;top:207.1px;font-size:7.0px;letter-spacing:0.001px;">S / L</div>
<div class="n" style="left:589.4px;top:207.1px;font-size:7.0px;letter-spacing:0.069px;">T / P</div>
<div class="n" style="left:662.5px;top:207.1px;font-size:7.0px;letter-spacing:0.301px;">Time</div>
<div class="n" style="left:757.5px;top:207.1px;font-size:7.0px;letter-spacing:0.070px;">Price</div>
<div class="n" style="left:910px;top:207.1px;font-size:7.0px;letter-spacing:0.277px;">Profit</div>
<div class="n" style="left:965.6px;top:207.1px;font-size:7.0px;letter-spacing:0.180px;">Change</div>
<svg style="left:685.2px;top:209.8px" width="5" height="4" viewBox="0 0 5 4" ><path d="M0.3 3 L2.3 0.6 L4.3 3 Z" fill="#222"/></svg>
<svg style="left:996px;top:206px" width="5" height="4" viewBox="0 0 5 4" ><path d="M0.6 3 L2.2 1 L3.8 3" stroke="#444" stroke-width="0.7" fill="none"/></svg>
<svg style="left:10.2px;top:220.29999999999998px" width="8.4" height="10" viewBox="0 0 8.4 10" ><rect x="1.25" y="0.75" width="6.1" height="8.5" rx="0.8" fill="#fff" stroke="#e03e3a" stroke-width="1"/><path d="M2.8 3.4 H4.8 M2.8 5.2 H4.8" stroke="#e03e3a" stroke-width="0.85"/></svg>
<div class="n" style="left:21.5px;top:221px;font-size:7.0px;letter-spacing:-0.157px;color:#1a1a1a;">2025.12.11 15:50:03</div>
<div class="n" style="left:154.2px;top:221px;font-size:7.0px;letter-spacing:0.040px;color:#1a1a1a;">xauusd.</div>
<div class="n" style="left:193.58416px;top:221px;font-size:7.0px;letter-spacing:-0.119px;color:#1a1a1a;">50246972678</div>
<div class="n" style="left:272.6px;top:221px;font-size:7.0px;letter-spacing:-0.001px;color:#1a1a1a;">sell</div>
<div class="n" style="left:350.58536000000004px;top:221px;font-size:7.0px;letter-spacing:-0.152px;color:#1a1a1a;">0.02</div>
<div class="n" style="left:420.23104px;top:221px;font-size:7.0px;letter-spacing:-0.148px;color:#1a1a1a;">4222.86</div>
<div class="n" style="left:581.93104px;top:221px;font-size:7.0px;letter-spacing:-0.148px;color:#1a1a1a;">4221.48</div>
<div class="n" style="left:633.38152px;top:221px;font-size:7.0px;letter-spacing:-0.157px;color:#1a1a1a;">2025.12.12 11:13:29</div>
<div class="n" style="left:750.83104px;top:221px;font-size:7.0px;letter-spacing:-0.148px;color:#1a1a1a;">4315.22</div>
<div class="n red" style="left:906.19848px;top:221px;font-size:7.0px;letter-spacing:-0.063px;">-184.72</div>
<div class="n red" style="left:968.00104px;top:221px;font-size:7.0px;letter-spacing:0.068px;">-2.19 %</div>
<svg style="left:10.2px;top:232.92999999999998px" width="8.4" height="10" viewBox="0 0 8.4 10" ><rect x="1.25" y="0.75" width="6.1" height="8.5" rx="0.8" fill="#fff" stroke="#1f66b8" stroke-width="1"/><path d="M2.8 3.4 H4.8 M2.8 5.2 H4.8" stroke="#1f66b8" stroke-width="0.85"/></svg>
<div class="n" style="left:21.5px;top:234px;font-size:7.0px;letter-spacing:-0.157px;color:#000;">2025.12.12 11:02:58</div>
<div class="n" style="left:154.2px;top:234px;font-size:7.0px;letter-spacing:0.040px;color:#000;">xauusd.</div>
<div class="n" style="left:193.58416px;top:234px;font-size:7.0px;letter-spacing:-0.119px;color:#000;">50247345305</div>
<div class="n" style="left:270.7px;top:234px;font-size:7.0px;letter-spacing:0.371px;color:#000;">buy</div>
<div class="n" style="left:350.58536000000004px;top:234px;font-size:7.0px;letter-spacing:-0.152px;color:#000;">0.01</div>
<div class="n" style="left:420.23104px;top:234px;font-size:7.0px;letter-spacing:-0.148px;color:#000;">4312.56</div>
<div style="left:527.9px;top:231.77999999999997px;width:80.3px;height:11.88px;background:#5ee85e;"></div>
<div class="n" style="left:581.93104px;top:234px;font-size:7.0px;letter-spacing:-0.148px;color:#000;">4315.06</div>
<div class="n" style="left:633.38152px;top:234px;font-size:7.0px;letter-spacing:-0.157px;color:#000;">2025.12.12 11:13:54</div>
<div class="n" style="left:750.83104px;top:234px;font-size:7.0px;letter-spacing:-0.148px;color:#000;">4315.06</div>
<div class="n blu" style="left:916.48536px;top:234px;font-size:7.0px;letter-spacing:-0.152px;">2.50</div>
<div class="n blu" style="left:970.78504px;top:234px;font-size:7.0px;letter-spacing:0.004px;">0.06 %</div>
<svg style="left:10.2px;top:245.55999999999997px" width="8.4" height="10" viewBox="0 0 8.4 10" ><rect x="1.25" y="0.75" width="6.1" height="8.5" rx="0.8" fill="#fff" stroke="#e03e3a" stroke-width="1"/><path d="M2.8 3.4 H4.8 M2.8 5.2 H4.8" stroke="#e03e3a" stroke-width="0.85"/></svg>
<div class="n" style="left:21.5px;top:246px;font-size:7.0px;letter-spacing:-0.157px;color:#1a1a1a;">2025.12.11 16:08:54</div>
<div class="n" style="left:154.2px;top:246px;font-size:7.0px;letter-spacing:0.040px;color:#1a1a1a;">xauusd.</div>
<div class="n" style="left:193.58416px;top:246px;font-size:7.0px;letter-spacing:-0.119px;color:#1a1a1a;">50246984181</div>
<div class="n" style="left:272.6px;top:246px;font-size:7.0px;letter-spacing:-0.001px;color:#1a1a1a;">sell</div>
<div class="n" style="left:350.58536000000004px;top:246px;font-size:7.0px;letter-spacing:-0.152px;color:#1a1a1a;">0.02</div>
<div class="n" style="left:420.23104px;top:246px;font-size:7.0px;letter-spacing:-0.148px;color:#1a1a1a;">4225.92</div>
<div class="n" style="left:581.93104px;top:246px;font-size:7.0px;letter-spacing:-0.148px;color:#1a1a1a;">4221.65</div>
<div class="n" style="left:633.38152px;top:246px;font-size:7.0px;letter-spacing:-0.157px;color:#1a1a1a;">2025.12.12 11:13:55</div>
<div class="n" style="left:750.83104px;top:246px;font-size:7.0px;letter-spacing:-0.148px;color:#1a1a1a;">4315.55</div>
<div class="n red" style="left:906.19848px;top:246px;font-size:7.0px;letter-spacing:-0.063px;">-179.26</div>
<div class="n red" style="left:968.00104px;top:246px;font-size:7.0px;letter-spacing:0.068px;">-2.12 %</div>
<svg style="left:10.2px;top:258.19px" width="8.4" height="10" viewBox="0 0 8.4 10" ><rect x="1.25" y="0.75" width="6.1" height="8.5" rx="0.8" fill="#fff" stroke="#e03e3a" stroke-width="1"/><path d="M2.8 3.4 H4.8 M2.8 5.2 H4.8" stroke="#e03e3a" stroke-width="0.85"/></svg>
<div class="n" style="left:21.5px;top:259px;font-size:7.0px;letter-spacing:-0.130px;color:#000;">2025.12.11 16:11:25</div>
<div class="n" style="left:154.2px;top:259px;font-size:7.0px;letter-spacing:0.040px;color:#000;">xauusd.</div>
<div class="n" style="left:193.58416px;top:259px;font-size:7.0px;letter-spacing:-0.119px;color:#000;">50246987951</div>
<div class="n" style="left:272.6px;top:259px;font-size:7.0px;letter-spacing:-0.001px;color:#000;">sell</div>
<div class="n" style="left:350.58536000000004px;top:259px;font-size:7.0px;letter-spacing:-0.152px;color:#000;">0.02</div>
<div class="n" style="left:420.23104px;top:259px;font-size:7.0px;letter-spacing:-0.148px;color:#000;">4229.32</div>
<div class="n" style="left:581.93104px;top:259px;font-size:7.0px;letter-spacing:-0.148px;color:#000;">4221.33</div>
<div class="n" style="left:633.38152px;top:259px;font-size:7.0px;letter-spacing:-0.157px;color:#000;">2025.12.12 11:14:52</div>
<div class="n" style="left:750.83104px;top:259px;font-size:7.0px;letter-spacing:-0.148px;color:#000;">4316.28</div>
<div class="n red" style="left:906.19848px;top:259px;font-size:7.0px;letter-spacing:-0.063px;">-173.92</div>
<div class="n red" style="left:968.00104px;top:259px;font-size:7.0px;letter-spacing:0.068px;">-2.06 %</div>
<svg style="left:10.2px;top:270.82px" width="8.4" height="10" viewBox="0 0 8.4 10" ><rect x="1.25" y="0.75" width="6.1" height="8.5" rx="0.8" fill="#fff" stroke="#e03e3a" stroke-width="1"/><path d="M2.8 3.4 H4.8 M2.8 5.2 H4.8" stroke="#e03e3a" stroke-width="0.85"/></svg>
<div class="n" style="left:21.5px;top:271px;font-size:7.0px;letter-spacing:-0.157px;color:#1a1a1a;">2025.12.11 16:30:04</div>
<div class="n" style="left:154.2px;top:271px;font-size:7.0px;letter-spacing:0.040px;color:#1a1a1a;">xauusd.</div>
<div class="n" style="left:193.58416px;top:271px;font-size:7.0px;letter-spacing:-0.119px;color:#1a1a1a;">50246998942</div>
<div class="n" style="left:272.6px;top:271px;font-size:7.0px;letter-spacing:-0.001px;color:#1a1a1a;">sell</div>
<div class="n" style="left:350.58536000000004px;top:271px;font-size:7.0px;letter-spacing:-0.152px;color:#1a1a1a;">0.02</div>
<div class="n" style="left:420.23104px;top:271px;font-size:7.0px;letter-spacing:-0.148px;color:#1a1a1a;">4232.32</div>
<div class="n" style="left:581.93104px;top:271px;font-size:7.0px;letter-spacing:-0.074px;color:#1a1a1a;">4220.11</div>
<div class="n" style="left:633.38152px;top:271px;font-size:7.0px;letter-spacing:-0.157px;color:#1a1a1a;">2025.12.12 11:15:00</div>
<div class="n" style="left:750.83104px;top:271px;font-size:7.0px;letter-spacing:-0.148px;color:#1a1a1a;">4317.25</div>
<div class="n red" style="left:906.19848px;top:271px;font-size:7.0px;letter-spacing:-0.063px;">-169.86</div>
<div class="n red" style="left:968.00104px;top:271px;font-size:7.0px;letter-spacing:0.068px;">-2.01 %</div>
<svg style="left:10.2px;top:283.45000000000005px" width="8.4" height="10" viewBox="0 0 8.4 10" ><rect x="1.25" y="0.75" width="6.1" height="8.5" rx="0.8" fill="#fff" stroke="#e03e3a" stroke-width="1"/><path d="M2.8 3.4 H4.8 M2.8 5.2 H4.8" stroke="#e03e3a" stroke-width="0.85"/></svg>
<div class="n" style="left:21.5px;top:284px;font-size:7.0px;letter-spacing:-0.157px;color:#000;">2025.12.11 16:31:37</div>
<div class="n" style="left:154.2px;top:284px;font-size:7.0px;letter-spacing:0.040px;color:#000;">xauusd.</div>
<div class="n" style="left:193.58416px;top:284px;font-size:7.0px;letter-spacing:-0.119px;color:#000;">50247001008</div>
<div class="n" style="left:272.6px;top:284px;font-size:7.0px;letter-spacing:-0.001px;color:#000;">sell</div>
<div class="n" style="left:350.58536000000004px;top:284px;font-size:7.0px;letter-spacing:-0.152px;color:#000;">0.02</div>
<div class="n" style="left:420.23104px;top:284px;font-size:7.0px;letter-spacing:-0.148px;color:#000;">4235.47</div>
<div class="n" style="left:581.93104px;top:284px;font-size:7.0px;letter-spacing:-0.148px;color:#000;">4237.70</div>
<div class="n" style="left:633.38152px;top:284px;font-size:7.0px;letter-spacing:-0.157px;color:#000;">2025.12.12 11:50:00</div>
<div class="n" style="left:750.83104px;top:284px;font-size:7.0px;letter-spacing:-0.148px;color:#000;">4315.96</div>
<div class="n red" style="left:906.19848px;top:284px;font-size:7.0px;letter-spacing:-0.063px;">-160.98</div>
<div class="n red" style="left:968.00104px;top:284px;font-size:7.0px;letter-spacing:0.068px;">-1.90 %</div>
<svg style="left:10.2px;top:296.08000000000004px" width="8.4" height="10" viewBox="0 0 8.4 10" ><rect x="1.25" y="0.75" width="6.1" height="8.5" rx="0.8" fill="#fff" stroke="#e03e3a" stroke-width="1"/><path d="M2.8 3.4 H4.8 M2.8 5.2 H4.8" stroke="#e03e3a" stroke-width="0.85"/></svg>
<div class="n" style="left:21.5px;top:297px;font-size:7.0px;letter-spacing:-0.157px;color:#1a1a1a;">2025.12.11 15:17:17</div>
<div class="n" style="left:154.2px;top:297px;font-size:7.0px;letter-spacing:0.040px;color:#1a1a1a;">xauusd.</div>
<div class="n" style="left:193.58416px;top:297px;font-size:7.0px;letter-spacing:-0.119px;color:#1a1a1a;">50246950012</div>
<div class="n" style="left:272.6px;top:297px;font-size:7.0px;letter-spacing:-0.001px;color:#1a1a1a;">sell</div>
<div class="n" style="left:350.58536000000004px;top:297px;font-size:7.0px;letter-spacing:-0.152px;color:#1a1a1a;">0.01</div>
<div class="n" style="left:420.23104px;top:297px;font-size:7.0px;letter-spacing:-0.148px;color:#1a1a1a;">4207.34</div>
<div class="n" style="left:581.93104px;top:297px;font-size:7.0px;letter-spacing:-0.148px;color:#1a1a1a;">4239.05</div>
<div class="n" style="left:633.38152px;top:297px;font-size:7.0px;letter-spacing:-0.157px;color:#1a1a1a;">2025.12.12 11:54:22</div>
<div class="n" style="left:750.83104px;top:297px;font-size:7.0px;letter-spacing:-0.148px;color:#1a1a1a;">4317.22</div>
<div class="n red" style="left:906.19848px;top:297px;font-size:7.0px;letter-spacing:-0.063px;">-109.88</div>
<div class="n red" style="left:968.00104px;top:297px;font-size:7.0px;letter-spacing:0.068px;">-2.61 %</div>
<svg style="left:10.2px;top:308.71000000000004px" width="8.4" height="10" viewBox="0 0 8.4 10" ><rect x="1.25" y="0.75" width="6.1" height="8.5" rx="0.8" fill="#fff" stroke="#e03e3a" stroke-width="1"/><path d="M2.8 3.4 H4.8 M2.8 5.2 H4.8" stroke="#e03e3a" stroke-width="0.85"/></svg>
<div class="n" style="left:21.5px;top:309px;font-size:7.0px;letter-spacing:-0.157px;color:#000;">2025.12.11 15:21:41</div>
<div class="n" style="left:154.2px;top:309px;font-size:7.0px;letter-spacing:0.040px;color:#000;">xauusd.</div>
<div class="n" style="left:193.58416px;top:309px;font-size:7.0px;letter-spacing:-0.119px;color:#000;">50246953102</div>
<div class="n" style="left:272.6px;top:309px;font-size:7.0px;letter-spacing:-0.001px;color:#000;">sell</div>
<div class="n" style="left:350.58536000000004px;top:309px;font-size:7.0px;letter-spacing:-0.152px;color:#000;">0.01</div>
<div class="n" style="left:420.23104px;top:309px;font-size:7.0px;letter-spacing:-0.148px;color:#000;">4210.49</div>
<div class="n" style="left:581.93104px;top:309px;font-size:7.0px;letter-spacing:-0.148px;color:#000;">4244.76</div>
<div class="n" style="left:633.38152px;top:309px;font-size:7.0px;letter-spacing:-0.157px;color:#000;">2025.12.12 11:54:30</div>
<div class="n" style="left:750.83104px;top:309px;font-size:7.0px;letter-spacing:-0.148px;color:#000;">4317.79</div>
<div class="n red" style="left:906.19848px;top:309px;font-size:7.0px;letter-spacing:-0.063px;">-107.30</div>
<div class="n red" style="left:968.00104px;top:309px;font-size:7.0px;letter-spacing:0.068px;">-2.55 %</div>
<svg style="left:10.2px;top:321.34000000000003px" width="8.4" height="10" viewBox="0 0 8.4 10" ><rect x="1.25" y="0.75" width="6.1" height="8.5" rx="0.8" fill="#fff" stroke="#e03e3a" stroke-width="1"/><path d="M2.8 3.4 H4.8 M2.8 5.2 H4.8" stroke="#e03e3a" stroke-width="0.85"/></svg>
<div class="n" style="left:21.5px;top:322px;font-size:7.0px;letter-spacing:-0.157px;color:#1a1a1a;">2025.12.11 15:28:46</div>
<div class="n" style="left:154.2px;top:322px;font-size:7.0px;letter-spacing:0.040px;color:#1a1a1a;">xauusd.</div>
<div class="n" style="left:193.58416px;top:322px;font-size:7.0px;letter-spacing:-0.119px;color:#1a1a1a;">50246956417</div>
<div class="n" style="left:272.6px;top:322px;font-size:7.0px;letter-spacing:-0.001px;color:#1a1a1a;">sell</div>
<div class="n" style="left:350.58536000000004px;top:322px;font-size:7.0px;letter-spacing:-0.152px;color:#1a1a1a;">0.01</div>
<div class="n" style="left:420.23104px;top:322px;font-size:7.0px;letter-spacing:-0.148px;color:#1a1a1a;">4213.51</div>
<div class="n" style="left:581.93104px;top:322px;font-size:7.0px;letter-spacing:-0.074px;color:#1a1a1a;">4252.11</div>
<div class="n" style="left:633.38152px;top:322px;font-size:7.0px;letter-spacing:-0.157px;color:#1a1a1a;">2025.12.12 11:54:43</div>
<div class="n" style="left:750.83104px;top:322px;font-size:7.0px;letter-spacing:-0.148px;color:#1a1a1a;">4318.66</div>
<div class="n red" style="left:906.19848px;top:322px;font-size:7.0px;letter-spacing:-0.063px;">-105.15</div>
<div class="n red" style="left:968.00104px;top:322px;font-size:7.0px;letter-spacing:0.068px;">-2.50 %</div>
<svg style="left:10.2px;top:333.97px" width="8.4" height="10" viewBox="0 0 8.4 10" ><rect x="1.25" y="0.75" width="6.1" height="8.5" rx="0.8" fill="#fff" stroke="#e03e3a" stroke-width="1"/><path d="M2.8 3.4 H4.8 M2.8 5.2 H4.8" stroke="#e03e3a" stroke-width="0.85"/></svg>
<div class="n" style="left:21.5px;top:335px;font-size:7.0px;letter-spacing:-0.157px;color:#000;">2025.12.11 15:37:28</div>
<div class="n" style="left:154.2px;top:335px;font-size:7.0px;letter-spacing:0.040px;color:#000;">xauusd.</div>
<div class="n" style="left:193.58416px;top:335px;font-size:7.0px;letter-spacing:-0.119px;color:#000;">50246963539</div>
<div class="n" style="left:272.6px;top:335px;font-size:7.0px;letter-spacing:-0.001px;color:#000;">sell</div>
<div class="n" style="left:350.58536000000004px;top:335px;font-size:7.0px;letter-spacing:-0.152px;color:#000;">0.01</div>
<div class="n" style="left:420.23104px;top:335px;font-size:7.0px;letter-spacing:-0.148px;color:#000;">4216.59</div>
<div class="n" style="left:581.93104px;top:335px;font-size:7.0px;letter-spacing:-0.148px;color:#000;">4262.38</div>
<div class="n" style="left:633.38152px;top:335px;font-size:7.0px;letter-spacing:-0.130px;color:#000;">2025.12.12 11:56:11</div>
<div class="n" style="left:750.83104px;top:335px;font-size:7.0px;letter-spacing:-0.148px;color:#000;">4319.67</div>
<div class="n red" style="left:906.19848px;top:335px;font-size:7.0px;letter-spacing:-0.063px;">-103.08</div>
<div class="n red" style="left:968.00104px;top:335px;font-size:7.0px;letter-spacing:0.068px;">-2.44 %</div>
<svg style="left:10.2px;top:346.6px" width="8.4" height="10" viewBox="0 0 8.4 10" ><rect x="1.25" y="0.75" width="6.1" height="8.5" rx="0.8" fill="#fff" stroke="#e03e3a" stroke-width="1"/><path d="M2.8 3.4 H4.8 M2.8 5.2 H4.8" stroke="#e03e3a" stroke-width="0.85"/></svg>
<div class="n" style="left:21.5px;top:347px;font-size:7.0px;letter-spacing:-0.157px;color:#1a1a1a;">2025.12.11 15:42:55</div>
<div class="n" style="left:154.2px;top:347px;font-size:7.0px;letter-spacing:0.040px;color:#1a1a1a;">xauusd.</div>
<div class="n" style="left:193.58416px;top:347px;font-size:7.0px;letter-spacing:-0.119px;color:#1a1a1a;">50246967663</div>
<div class="n" style="left:272.6px;top:347px;font-size:7.0px;letter-spacing:-0.001px;color:#1a1a1a;">sell</div>
<div class="n" style="left:350.58536000000004px;top:347px;font-size:7.0px;letter-spacing:-0.152px;color:#1a1a1a;">0.01</div>
<div class="n" style="left:420.23104px;top:347px;font-size:7.0px;letter-spacing:-0.148px;color:#1a1a1a;">4220.02</div>
<div class="n" style="left:581.93104px;top:347px;font-size:7.0px;letter-spacing:-0.148px;color:#1a1a1a;">4278.48</div>
<div class="n" style="left:633.38152px;top:347px;font-size:7.0px;letter-spacing:-0.185px;color:#1a1a1a;">2025.12.12 12:21:39</div>
<div class="n" style="left:750.83104px;top:347px;font-size:7.0px;letter-spacing:-0.074px;color:#1a1a1a;">4321.11</div>
<div class="n red" style="left:906.19848px;top:347px;font-size:7.0px;letter-spacing:-0.063px;">-101.09</div>
<div class="n red" style="left:968.00104px;top:347px;font-size:7.0px;letter-spacing:0.068px;">-2.40 %</div>
<svg style="left:10.2px;top:359.23px" width="8.4" height="10" viewBox="0 0 8.4 10" ><rect x="1.25" y="0.75" width="6.1" height="8.5" rx="0.8" fill="#fff" stroke="#e03e3a" stroke-width="1"/><path d="M2.8 3.4 H4.8 M2.8 5.2 H4.8" stroke="#e03e3a" stroke-width="0.85"/></svg>
<div class="n" style="left:21.5px;top:360px;font-size:7.0px;letter-spacing:-0.157px;color:#000;">2025.12.12 11:32:03</div>
<div class="n" style="left:154.2px;top:360px;font-size:7.0px;letter-spacing:0.040px;color:#000;">xauusd.</div>
<div class="n" style="left:193.58416px;top:360px;font-size:7.0px;letter-spacing:-0.119px;color:#000;">50247359425</div>
<div class="n" style="left:272.6px;top:360px;font-size:7.0px;letter-spacing:-0.001px;color:#000;">sell</div>
<div class="n" style="left:350.58536000000004px;top:360px;font-size:7.0px;letter-spacing:-0.152px;color:#000;">0.02</div>
<div class="n" style="left:420.23104px;top:360px;font-size:7.0px;letter-spacing:-0.074px;color:#000;">4311.46</div>
<div class="n" style="left:581.93104px;top:360px;font-size:7.0px;letter-spacing:-0.148px;color:#000;">4308.96</div>
<div class="n" style="left:633.38152px;top:360px;font-size:7.0px;letter-spacing:-0.185px;color:#000;">2025.12.12 12:34:55</div>
<div class="n" style="left:750.83104px;top:360px;font-size:7.0px;letter-spacing:-0.148px;color:#000;">4323.16</div>
<div class="n red" style="left:909.94992px;top:360px;font-size:7.0px;letter-spacing:-0.050px;">-23.40</div>
<div class="n red" style="left:968.00104px;top:360px;font-size:7.0px;letter-spacing:0.068px;">-0.27 %</div>
<svg style="left:10.2px;top:371.86px" width="8.4" height="10" viewBox="0 0 8.4 10" ><rect x="1.25" y="0.75" width="6.1" height="8.5" rx="0.8" fill="#fff" stroke="#e03e3a" stroke-width="1"/><path d="M2.8 3.4 H4.8 M2.8 5.2 H4.8" stroke="#e03e3a" stroke-width="0.85"/></svg>
<div class="n" style="left:21.5px;top:373px;font-size:7.0px;letter-spacing:-0.185px;color:#1a1a1a;">2025.12.12 17:25:03</div>
<div class="n" style="left:154.2px;top:373px;font-size:7.0px;letter-spacing:0.040px;color:#1a1a1a;">xauusd.</div>
<div class="n" style="left:193.58416px;top:373px;font-size:7.0px;letter-spacing:-0.119px;color:#1a1a1a;">50247569038</div>
<div class="n" style="left:272.6px;top:373px;font-size:7.0px;letter-spacing:-0.001px;color:#1a1a1a;">sell</div>
<div class="n" style="left:350.58536000000004px;top:373px;font-size:7.0px;letter-spacing:-0.152px;color:#1a1a1a;">0.01</div>
<div class="n" style="left:420.23104px;top:373px;font-size:7.0px;letter-spacing:-0.148px;color:#1a1a1a;">4312.28</div>
<div style="left:527.9px;top:370.71px;width:80.3px;height:11.88px;background:#5ee85e;"></div>
<div class="n" style="left:581.93104px;top:373px;font-size:7.0px;letter-spacing:-0.148px;color:#1a1a1a;">4309.78</div>
<div class="n" style="left:633.38152px;top:373px;font-size:7.0px;letter-spacing:-0.185px;color:#1a1a1a;">2025.12.12 17:25:05</div>
<div class="n" style="left:750.83104px;top:373px;font-size:7.0px;letter-spacing:-0.148px;color:#1a1a1a;">4309.78</div>
<div class="n blu" style="left:916.48536px;top:373px;font-size:7.0px;letter-spacing:-0.152px;">2.50</div>
<div class="n blu" style="left:970.78504px;top:373px;font-size:7.0px;letter-spacing:0.004px;">0.06 %</div>
<svg style="left:10.2px;top:384.49px" width="8.4" height="10" viewBox="0 0 8.4 10" ><rect x="1.25" y="0.75" width="6.1" height="8.5" rx="0.8" fill="#fff" stroke="#e03e3a" stroke-width="1"/><path d="M2.8 3.4 H4.8 M2.8 5.2 H4.8" stroke="#e03e3a" stroke-width="0.85"/></svg>
<div class="n" style="left:21.5px;top:385px;font-size:7.0px;letter-spacing:-0.185px;color:#000;">2025.12.12 17:25:48</div>
<div class="n" style="left:154.2px;top:385px;font-size:7.0px;letter-spacing:0.040px;color:#000;">xauusd.</div>
<div class="n" style="left:193.58416px;top:385px;font-size:7.0px;letter-spacing:-0.119px;color:#000;">50247570708</div>
<div class="n" style="left:272.6px;top:385px;font-size:7.0px;letter-spacing:-0.001px;color:#000;">sell</div>
<div class="n" style="left:350.58536000000004px;top:385px;font-size:7.0px;letter-spacing:-0.152px;color:#000;">0.01</div>
<div class="n" style="left:420.23104px;top:385px;font-size:7.0px;letter-spacing:-0.148px;color:#000;">4312.22</div>
<div style="left:527.9px;top:383.34px;width:80.3px;height:11.88px;background:#5ee85e;"></div>
<div class="n" style="left:581.93104px;top:385px;font-size:7.0px;letter-spacing:-0.148px;color:#000;">4309.72</div>
<div class="n" style="left:633.38152px;top:385px;font-size:7.0px;letter-spacing:-0.185px;color:#000;">2025.12.12 17:25:55</div>
<div class="n" style="left:750.83104px;top:385px;font-size:7.0px;letter-spacing:-0.148px;color:#000;">4309.72</div>
<div class="n blu" style="left:916.48536px;top:385px;font-size:7.0px;letter-spacing:-0.152px;">2.50</div>
<div class="n blu" style="left:970.78504px;top:385px;font-size:7.0px;letter-spacing:0.004px;">0.06 %</div>
<svg style="left:10.2px;top:397.12px" width="8.4" height="10" viewBox="0 0 8.4 10" ><rect x="1.25" y="0.75" width="6.1" height="8.5" rx="0.8" fill="#fff" stroke="#e03e3a" stroke-width="1"/><path d="M2.8 3.4 H4.8 M2.8 5.2 H4.8" stroke="#e03e3a" stroke-width="0.85"/></svg>
<div class="n" style="left:21.5px;top:398px;font-size:7.0px;letter-spacing:-0.185px;color:#1a1a1a;">2025.12.12 17:26:36</div>
<div class="n" style="left:154.2px;top:398px;font-size:7.0px;letter-spacing:0.040px;color:#1a1a1a;">xauusd.</div>
<div class="n" style="left:193.58416px;top:398px;font-size:7.0px;letter-spacing:-0.119px;color:#1a1a1a;">50247571587</div>
<div class="n" style="left:272.6px;top:398px;font-size:7.0px;letter-spacing:-0.001px;color:#1a1a1a;">sell</div>
<div class="n" style="left:350.58536000000004px;top:398px;font-size:7.0px;letter-spacing:-0.152px;color:#1a1a1a;">0.01</div>
<div class="n" style="left:420.23104px;top:398px;font-size:7.0px;letter-spacing:-0.074px;color:#1a1a1a;">4311.17</div>
<div style="left:527.9px;top:395.96999999999997px;width:80.3px;height:11.88px;background:#5ee85e;"></div>
<div class="n" style="left:581.93104px;top:398px;font-size:7.0px;letter-spacing:-0.148px;color:#1a1a1a;">4308.67</div>
<div class="n" style="left:633.38152px;top:398px;font-size:7.0px;letter-spacing:-0.185px;color:#1a1a1a;">2025.12.12 17:27:51</div>
<div class="n" style="left:750.83104px;top:398px;font-size:7.0px;letter-spacing:-0.148px;color:#1a1a1a;">4308.67</div>
<div class="n blu" style="left:916.48536px;top:398px;font-size:7.0px;letter-spacing:-0.152px;">2.50</div>
<div class="n blu" style="left:970.78504px;top:398px;font-size:7.0px;letter-spacing:0.004px;">0.06 %</div>
<svg style="left:10.2px;top:409.75px" width="8.4" height="10" viewBox="0 0 8.4 10" ><rect x="1.25" y="0.75" width="6.1" height="8.5" rx="0.8" fill="#fff" stroke="#e03e3a" stroke-width="1"/><path d="M2.8 3.4 H4.8 M2.8 5.2 H4.8" stroke="#e03e3a" stroke-width="0.85"/></svg>
<div class="n" style="left:21.5px;top:410px;font-size:7.0px;letter-spacing:-0.185px;color:#000;">2025.12.12 17:27:58</div>
<div class="n" style="left:154.2px;top:410px;font-size:7.0px;letter-spacing:0.040px;color:#000;">xauusd.</div>
<div class="n" style="left:193.58416px;top:410px;font-size:7.0px;letter-spacing:-0.119px;color:#000;">50247573263</div>
<div class="n" style="left:272.6px;top:410px;font-size:7.0px;letter-spacing:-0.001px;color:#000;">sell</div>
<div class="n" style="left:350.58536000000004px;top:410px;font-size:7.0px;letter-spacing:-0.152px;color:#000;">0.01</div>
<div class="n" style="left:420.23104px;top:410px;font-size:7.0px;letter-spacing:-0.148px;color:#000;">4310.31</div>
<div style="left:527.9px;top:408.59999999999997px;width:80.3px;height:11.88px;background:#5ee85e;"></div>
<div class="n" style="left:581.93104px;top:410px;font-size:7.0px;letter-spacing:-0.148px;color:#000;">4307.81</div>
<div class="n" style="left:633.38152px;top:410px;font-size:7.0px;letter-spacing:-0.185px;color:#000;">2025.12.12 17:28:25</div>
<div class="n" style="left:750.83104px;top:410px;font-size:7.0px;letter-spacing:-0.148px;color:#000;">4307.81</div>
<div class="n blu" style="left:916.48536px;top:410px;font-size:7.0px;letter-spacing:-0.152px;">2.50</div>
<div class="n blu" style="left:970.78504px;top:410px;font-size:7.0px;letter-spacing:0.004px;">0.06 %</div>
<svg style="left:10.2px;top:422.38px" width="8.4" height="10" viewBox="0 0 8.4 10" ><rect x="1.25" y="0.75" width="6.1" height="8.5" rx="0.8" fill="#fff" stroke="#e03e3a" stroke-width="1"/><path d="M2.8 3.4 H4.8 M2.8 5.2 H4.8" stroke="#e03e3a" stroke-width="0.85"/></svg>
<div class="n" style="left:21.5px;top:423px;font-size:7.0px;letter-spacing:-0.185px;color:#1a1a1a;">2025.12.12 17:28:32</div>
<div class="n" style="left:154.2px;top:423px;font-size:7.0px;letter-spacing:0.040px;color:#1a1a1a;">xauusd.</div>
<div class="n" style="left:193.58416px;top:423px;font-size:7.0px;letter-spacing:-0.119px;color:#1a1a1a;">50247573856</div>
<div class="n" style="left:272.6px;top:423px;font-size:7.0px;letter-spacing:-0.001px;color:#1a1a1a;">sell</div>
<div class="n" style="left:350.58536000000004px;top:423px;font-size:7.0px;letter-spacing:-0.152px;color:#1a1a1a;">0.01</div>
<div class="n" style="left:420.23104px;top:423px;font-size:7.0px;letter-spacing:-0.148px;color:#1a1a1a;">4310.23</div>
<div style="left:527.9px;top:421.22999999999996px;width:80.3px;height:11.88px;background:#5ee85e;"></div>
<div class="n" style="left:581.93104px;top:423px;font-size:7.0px;letter-spacing:-0.148px;color:#1a1a1a;">4307.73</div>
<div class="n" style="left:633.38152px;top:423px;font-size:7.0px;letter-spacing:-0.185px;color:#1a1a1a;">2025.12.12 17:28:49</div>
<div class="n" style="left:750.83104px;top:423px;font-size:7.0px;letter-spacing:-0.148px;color:#1a1a1a;">4307.73</div>
<div class="n blu" style="left:916.48536px;top:423px;font-size:7.0px;letter-spacing:-0.152px;">2.50</div>
<div class="n blu" style="left:970.78504px;top:423px;font-size:7.0px;letter-spacing:0.004px;">0.06 %</div>
<svg style="left:10.2px;top:435.01px" width="8.4" height="10" viewBox="0 0 8.4 10" ><rect x="1.25" y="0.75" width="6.1" height="8.5" rx="0.8" fill="#fff" stroke="#e03e3a" stroke-width="1"/><path d="M2.8 3.4 H4.8 M2.8 5.2 H4.8" stroke="#e03e3a" stroke-width="0.85"/></svg>
<div class="n" style="left:21.5px;top:436px;font-size:7.0px;letter-spacing:-0.185px;color:#000;">2025.12.12 17:30:15</div>
<div class="n" style="left:154.2px;top:436px;font-size:7.0px;letter-spacing:0.040px;color:#000;">xauusd.</div>
<div class="n" style="left:193.58416px;top:436px;font-size:7.0px;letter-spacing:-0.119px;color:#000;">50247577802</div>
<div class="n" style="left:272.6px;top:436px;font-size:7.0px;letter-spacing:-0.001px;color:#000;">sell</div>
<div class="n" style="left:350.58536000000004px;top:436px;font-size:7.0px;letter-spacing:-0.152px;color:#000;">0.01</div>
<div class="n" style="left:420.23104px;top:436px;font-size:7.0px;letter-spacing:-0.148px;color:#000;">4302.88</div>
<div class="n" style="left:581.93104px;top:436px;font-size:7.0px;letter-spacing:-0.148px;color:#000;">4301.94</div>
<div class="n" style="left:633.38152px;top:436px;font-size:7.0px;letter-spacing:-0.185px;color:#000;">2025.12.12 17:31:30</div>
<div class="n" style="left:750.83104px;top:436px;font-size:7.0px;letter-spacing:-0.148px;color:#000;">4310.71</div>
<div class="n red" style="left:913.70136px;top:436px;font-size:7.0px;letter-spacing:-0.031px;">-7.83</div>
<div class="n red" style="left:968.00104px;top:436px;font-size:7.0px;letter-spacing:0.068px;">-0.18 %</div>
<svg style="left:10.2px;top:447.64px" width="8.4" height="10" viewBox="0 0 8.4 10" ><rect x="1.25" y="0.75" width="6.1" height="8.5" rx="0.8" fill="#fff" stroke="#e03e3a" stroke-width="1"/><path d="M2.8 3.4 H4.8 M2.8 5.2 H4.8" stroke="#e03e3a" stroke-width="0.85"/></svg>
<div class="n" style="left:21.5px;top:448px;font-size:7.0px;letter-spacing:-0.185px;color:#1a1a1a;">2025.12.12 17:31:07</div>
<div class="n" style="left:154.2px;top:448px;font-size:7.0px;letter-spacing:0.040px;color:#1a1a1a;">xauusd.</div>
<div class="n" style="left:193.58416px;top:448px;font-size:7.0px;letter-spacing:-0.119px;color:#1a1a1a;">50247579049</div>
<div class="n" style="left:272.6px;top:448px;font-size:7.0px;letter-spacing:-0.001px;color:#1a1a1a;">sell</div>
<div class="n" style="left:350.58536000000004px;top:448px;font-size:7.0px;letter-spacing:-0.152px;color:#1a1a1a;">0.01</div>
<div class="n" style="left:420.23104px;top:448px;font-size:7.0px;letter-spacing:-0.148px;color:#1a1a1a;">4306.00</div>
<div style="left:527.9px;top:446.48999999999995px;width:80.3px;height:11.88px;background:#5ee85e;"></div>
<div class="n" style="left:581.93104px;top:448px;font-size:7.0px;letter-spacing:-0.148px;color:#1a1a1a;">4303.50</div>
<div class="n" style="left:633.38152px;top:448px;font-size:7.0px;letter-spacing:-0.185px;color:#1a1a1a;">2025.12.12 17:33:35</div>
<div class="n" style="left:750.83104px;top:448px;font-size:7.0px;letter-spacing:-0.148px;color:#1a1a1a;">4303.50</div>
<div class="n blu" style="left:916.48536px;top:448px;font-size:7.0px;letter-spacing:-0.152px;">2.50</div>
<div class="n blu" style="left:970.78504px;top:448px;font-size:7.0px;letter-spacing:0.004px;">0.06 %</div>
<svg style="left:10.2px;top:460.27000000000004px" width="8.4" height="10" viewBox="0 0 8.4 10" ><rect x="1.25" y="0.75" width="6.1" height="8.5" rx="0.8" fill="#fff" stroke="#e03e3a" stroke-width="1"/><path d="M2.8 3.4 H4.8 M2.8 5.2 H4.8" stroke="#e03e3a" stroke-width="0.85"/></svg>
<div class="n" style="left:21.5px;top:461px;font-size:7.0px;letter-spacing:-0.185px;color:#000;">2025.12.12 17:33:35</div>
<div class="n" style="left:154.2px;top:461px;font-size:7.0px;letter-spacing:0.040px;color:#000;">xauusd.</div>
<div class="n" style="left:193.58416px;top:461px;font-size:7.0px;letter-spacing:-0.119px;color:#000;">50247582307</div>
<div class="n" style="left:272.6px;top:461px;font-size:7.0px;letter-spacing:-0.001px;color:#000;">sell</div>
<div class="n" style="left:350.58536000000004px;top:461px;font-size:7.0px;letter-spacing:-0.152px;color:#000;">0.01</div>
<div class="n" style="left:420.23104px;top:461px;font-size:7.0px;letter-spacing:-0.148px;color:#000;">4303.19</div>
<div class="n" style="left:581.93104px;top:461px;font-size:7.0px;letter-spacing:-0.148px;color:#000;">4300.69</div>
<div class="n" style="left:633.38152px;top:461px;font-size:7.0px;letter-spacing:-0.185px;color:#000;">2025.12.12 17:38:57</div>
<div class="n" style="left:750.83104px;top:461px;font-size:7.0px;letter-spacing:-0.148px;color:#000;">4314.69</div>
<div class="n red" style="left:909.94992px;top:461px;font-size:7.0px;letter-spacing:0.037px;">-11.50</div>
<div class="n red" style="left:968.00104px;top:461px;font-size:7.0px;letter-spacing:0.068px;">-0.27 %</div>
<div style="left:7.6px;top:471.40000000000003px;width:987.5px;height:12.2px;background:#c7c7c7;"></div>
<div style="left:995.1px;top:471.3px;width:4.9px;height:20px;background:#f6f6f6;"></div>
<svg style="left:10px;top:473.5px" width="9" height="9" viewBox="0 0 9 9" ><circle cx="4.2" cy="4.1" r="3.1" fill="none" stroke="#1a1a1a" stroke-width="0.85"/><path d="M2.4 4.1 H6" stroke="#1a1a1a" stroke-width="0.9"/></svg>
<div class="n" style="left:21.8px;top:473.1px;font-size:7.0px;letter-spacing:0.280px;font-weight:bold;color:#0c0c0c;-webkit-text-stroke:0.15px;">Profit: -5 682.36</div>
<div class="n" style="left:82.5px;top:473.1px;font-size:7.0px;letter-spacing:0.115px;font-weight:bold;color:#0c0c0c;-webkit-text-stroke:0.15px;">Credit: 0.00</div>
<div class="n" style="left:127px;top:473.1px;font-size:7.0px;letter-spacing:0.162px;font-weight:bold;color:#0c0c0c;-webkit-text-stroke:0.15px;">Deposit: 18 366.65</div>
<div class="n" style="left:196px;top:473.1px;font-size:7.0px;letter-spacing:0.294px;font-weight:bold;color:#0c0c0c;-webkit-text-stroke:0.15px;">Withdrawal: -12 680.00</div>
<div class="n" style="left:282.5px;top:473.1px;font-size:7.0px;letter-spacing:0.019px;font-weight:bold;color:#0c0c0c;-webkit-text-stroke:0.15px;">Balance: 4.29</div>
<div class="n" style="left:898px;top:473.1px;font-size:7.0px;letter-spacing:0.202px;font-weight:bold;color:#0c0c0c;-webkit-text-stroke:0.15px;">-5 501.22</div>
<div style="left:6.9px;top:491.2px;width:993.1px;height:6.8px;background:#f0f0f0;"></div>
<div style="left:6.9px;top:491.1px;width:993.1px;height:0.8px;background:#707070;"></div>
<div style="left:0px;top:203.2px;width:6.9px;height:294.8px;background:#bfcddb;"></div>
<svg style="left:0px;top:207.5px" width="7" height="6" viewBox="0 0 7 6" ><path d="M0.4 0.6 L4.4 4.6 M4.4 0.6 L0.4 4.6" stroke="#0a0a0a" stroke-width="1.2"/></svg>
<div class="t" style="left:-8.6px;top:485.6px;font-size:5.6px;line-height:6px;transform:rotate(-90deg);transform-origin:center;color:#111;width:24px;text-align:center;letter-spacing:0;">Toolbox</div>
<div style="left:84.4px;top:490.6px;width:37px;height:8px;background:#fff;border-left:1px solid #111;border-right:1px solid #111;"></div>
<div class="t" style="left:91px;top:493.0px;font-size:7.2px;letter-spacing:-0.087px;font-weight:bold;color:#111;">History</div>
<div class="t" style="left:18px;top:493.0px;font-size:7.4px;letter-spacing:-0.12px;color:#8a8a8a;-webkit-text-stroke:0.1px;font-size:7.3px;letter-spacing:-0.160px;">Trade</div>
<div class="t" style="left:48.5px;top:493.0px;font-size:7.4px;letter-spacing:-0.12px;color:#8a8a8a;-webkit-text-stroke:0.1px;font-size:7.3px;letter-spacing:-0.418px;">Exposure</div>
<div class="t" style="left:127.5px;top:493.0px;font-size:7.4px;letter-spacing:-0.12px;color:#8a8a8a;-webkit-text-stroke:0.1px;font-size:7.3px;letter-spacing:-0.313px;">News</div>
<div class="t" style="left:158px;top:493.0px;font-size:7.4px;letter-spacing:-0.12px;color:#8a8a8a;-webkit-text-stroke:0.1px;font-size:7.3px;letter-spacing:0.121px;">Mailbox</div>
<div class="t" style="left:197.5px;top:493.0px;font-size:7.4px;letter-spacing:-0.12px;color:#8a8a8a;-webkit-text-stroke:0.1px;font-size:7.3px;letter-spacing:-0.016px;">Calendar</div>
<div class="t" style="left:240px;top:493.0px;font-size:7.4px;letter-spacing:-0.12px;color:#8a8a8a;-webkit-text-stroke:0.1px;font-size:7.3px;letter-spacing:0.108px;">Company</div>
<div class="t" style="left:285px;top:493.0px;font-size:7.4px;letter-spacing:-0.12px;color:#8a8a8a;-webkit-text-stroke:0.1px;font-size:7.3px;letter-spacing:0.057px;">Alerts</div>
<div class="t" style="left:317px;top:493.0px;font-size:7.4px;letter-spacing:-0.12px;color:#8a8a8a;-webkit-text-stroke:0.1px;font-size:7.3px;letter-spacing:0.133px;">Articles</div>
<div class="t" style="left:354px;top:493.0px;font-size:7.4px;letter-spacing:-0.12px;color:#8a8a8a;-webkit-text-stroke:0.1px;font-size:7.3px;letter-spacing:-0.236px;">Code Base</div>
<div class="t" style="left:401px;top:493.0px;font-size:7.4px;letter-spacing:-0.12px;color:#8a8a8a;-webkit-text-stroke:0.1px;font-size:7.3px;letter-spacing:-0.250px;">Experts</div>
<div class="t" style="left:437px;top:493.0px;font-size:7.4px;letter-spacing:-0.12px;color:#8a8a8a;-webkit-text-stroke:0.1px;font-size:7.3px;letter-spacing:-0.135px;">Journal</div>
<div style="left:42.5px;top:494px;width:0.7px;height:6px;background:#9a9a9a;"></div>
<div style="left:150px;top:494px;width:0.7px;height:6px;background:#9a9a9a;"></div>
<div style="left:190.5px;top:494px;width:0.7px;height:6px;background:#9a9a9a;"></div>
<div style="left:233.5px;top:494px;width:0.7px;height:6px;background:#9a9a9a;"></div>
<div style="left:278px;top:494px;width:0.7px;height:6px;background:#9a9a9a;"></div>
<div style="left:310.5px;top:494px;width:0.7px;height:6px;background:#9a9a9a;"></div>
<div style="left:347.5px;top:494px;width:0.7px;height:6px;background:#9a9a9a;"></div>
<div style="left:394.5px;top:494px;width:0.7px;height:6px;background:#9a9a9a;"></div>
<div style="left:430.5px;top:494px;width:0.7px;height:6px;background:#9a9a9a;"></div>
<svg style="left:850px;top:495.2px" width="7" height="6" viewBox="0 0 7 6" ><path d="M0.6 5 V2.6 L3.2 0.8 L5.8 2.6 V5 Z" fill="#f0a020" stroke="#d08010" stroke-width="0.5"/></svg>
<div class="t" style="left:860.8px;top:494.2px;font-size:7.3px;letter-spacing:-0.1px;color:#222;-webkit-text-stroke:0.1px;">Market</div>
<div style="left:888px;top:496px;width:0.7px;height:4px;background:#9a9a9a;"></div>
<div class="t" style="left:897px;top:494.2px;font-size:7.3px;letter-spacing:-0.1px;color:#222;-webkit-text-stroke:0.1px;">Signals</div>
<div style="left:929px;top:496px;width:0.7px;height:4px;background:#9a9a9a;"></div>
<svg style="left:935.6px;top:495.2px" width="9" height="6" viewBox="0 0 9 6" ><path d="M2.6 5.6 C1 5.6 0.9 3.6 2.5 3.4 C2.6 1.4 5.6 0.9 6.3 2.8 C8.4 2.4 9 5.6 7.1 5.6 Z" fill="#e6f1fb" stroke="#2a78c8" stroke-width="0.8"/></svg>
<div class="t" style="left:947.6px;top:494.2px;font-size:7.3px;letter-spacing:-0.1px;color:#222;-webkit-text-stroke:0.1px;">VPS</div>
<svg style="left:968.6px;top:495.2px" width="10" height="6" viewBox="0 0 10 6" ><rect x="0.6" y="0.6" width="8.4" height="6" rx="1.4" fill="#e6f1fb" stroke="#2a78c8" stroke-width="0.9"/></svg>
<div class="t" style="left:981px;top:494.2px;font-size:7.3px;letter-spacing:-0.1px;color:#222;-webkit-text-stroke:0.1px;">Tester</div>
<svg style="left:996px;top:484.6px" width="4" height="4" viewBox="0 0 4 4" ><path d="M0.4 0.8 L1.9 2.6 L3.4 0.8" stroke="#444" stroke-width="0.7" fill="none"/></svg>
</body></html>
